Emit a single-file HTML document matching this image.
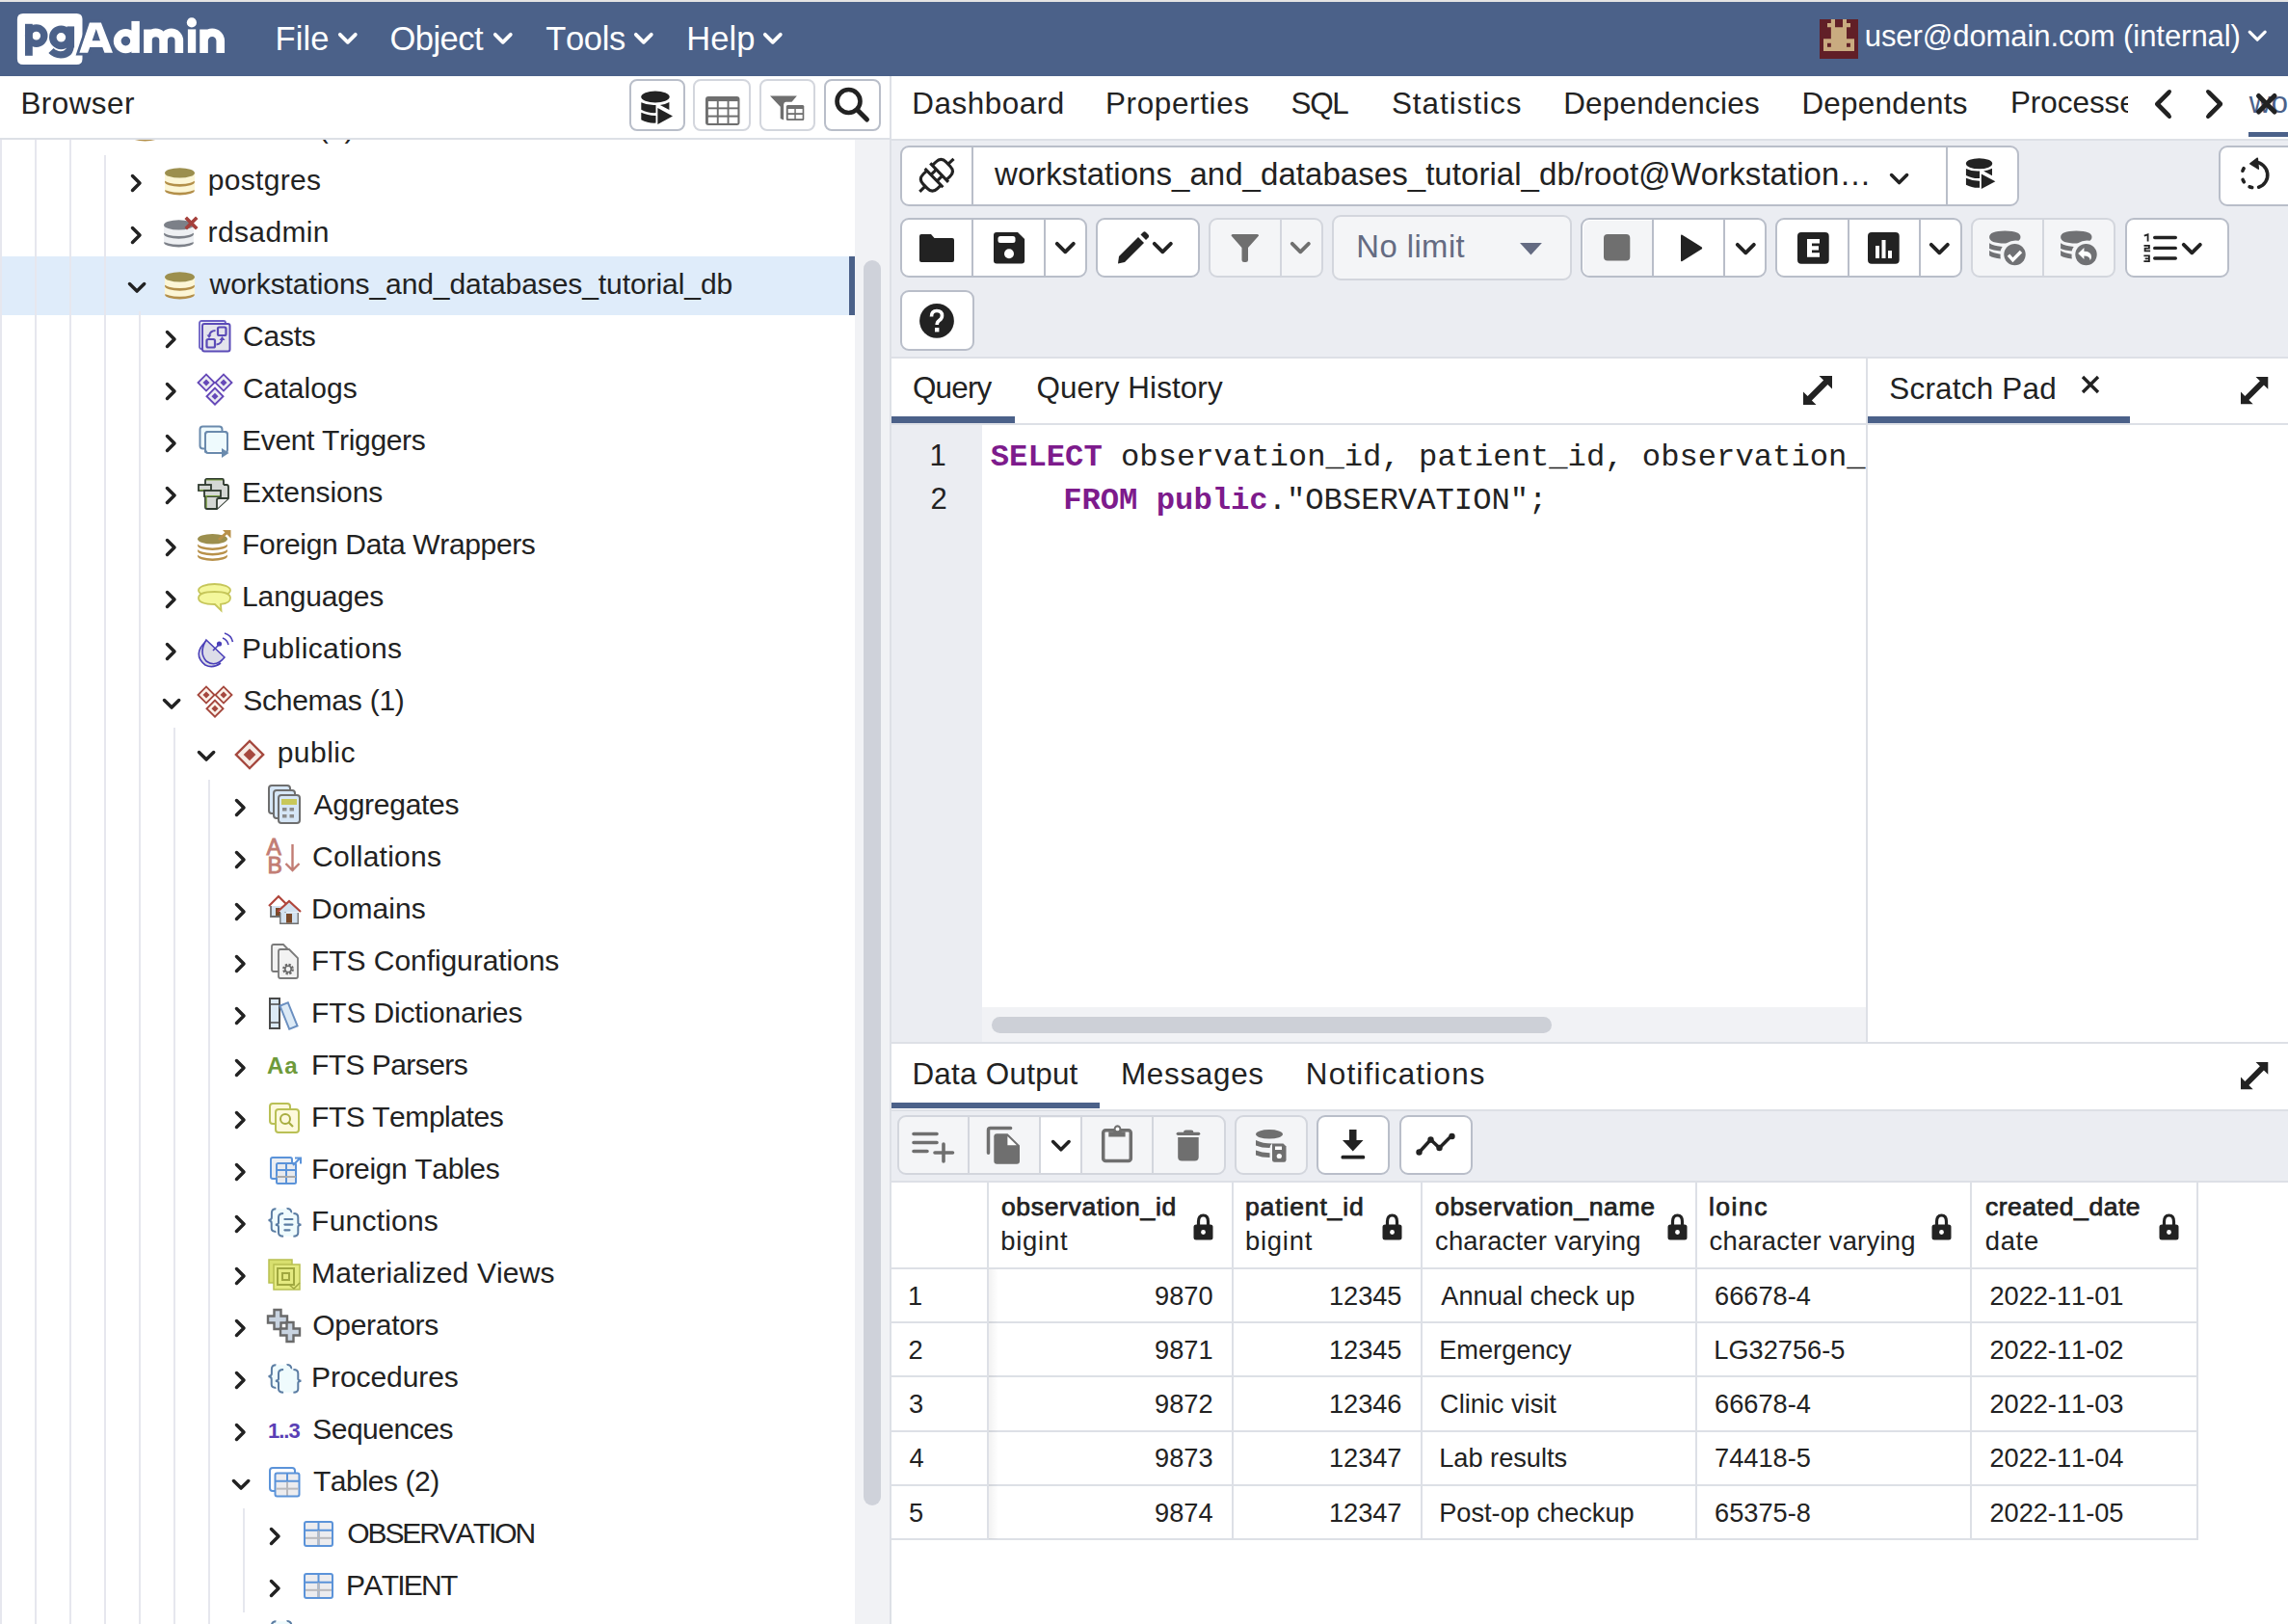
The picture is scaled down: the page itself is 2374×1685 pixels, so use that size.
<!DOCTYPE html>
<html><head><meta charset="utf-8"><title>pgAdmin 4</title>
<style>
html,body{margin:0;padding:0;}
body{width:2374px;height:1685px;position:relative;overflow:hidden;background:#fff;font-family:'Liberation Sans', sans-serif;}
.t{position:absolute;white-space:nowrap;font-kerning:none;}
.r{position:absolute;}
.s{position:absolute;overflow:visible;}
</style></head><body>
<div class="r" style="left:0.0px;top:0.0px;width:2374.0px;height:2.0px;background:#e4e4e4;"></div><div class="r" style="left:0.0px;top:2.0px;width:2374.0px;height:77.0px;background:#4b6189;"></div><svg class="s" style="left:0.0px;top:0.0px;" width="240" height="79" viewBox="0 0 240 79">
<path d="M24,14.1 H79.5 Q85.5,14.1 85.5,20.1 V61 Q85.5,67 79.5,67 H24 Q17.9,67 17.9,61 V20.1 Q17.9,14.1 24,14.1 Z" fill="#fff"/>
<rect x="26" y="24.8" width="7.8" height="33" fill="#4b6189"/>
<circle cx="37.7" cy="37.1" r="8.1" fill="none" stroke="#4b6189" stroke-width="7.4"/>
<circle cx="63.4" cy="38.8" r="8.6" fill="none" stroke="#4b6189" stroke-width="7.6"/>
<rect x="69.5" y="27.4" width="7.6" height="22" fill="#4b6189"/>
<path d="M73.3,46 Q73.3,56.8 63,56.8 Q57,56.8 53,52.5" fill="none" stroke="#4b6189" stroke-width="7.2"/>
<path d="M82.4,54.7 L92.9,23.5 L104.9,23.5 L117,54.7 L108.4,54.7 L106.3,49 L93.2,49 L91.1,54.7 Z" fill="#4b6189" stroke="#4b6189" stroke-width="5.5" stroke-linejoin="miter"/>
<path d="M82.4,54.7 L92.9,23.5 L104.9,23.5 L117,54.7 L108.4,54.7 L106.3,49 L93.2,49 L91.1,54.7 Z M95.6,42.3 L99.8,30 L104,42.3 Z" fill="#fff" fill-rule="evenodd"/>
<circle cx="130.4" cy="42.6" r="8.7" fill="none" stroke="#fff" stroke-width="7.8"/>
<rect x="136.4" y="21.9" width="8.4" height="33" fill="#fff"/>
<path d="M153.45,54.9 V30.4 M153.45,42 A8.07,8.07 0 0 1 169.6,42 V54.9 M169.6,42 A8.07,8.07 0 0 1 185.85,42 V54.9" fill="none" stroke="#fff" stroke-width="8.6"/>
<rect x="194.9" y="30.4" width="8.3" height="24.5" fill="#fff"/>
<circle cx="198.9" cy="23.4" r="5.1" fill="#fff"/>
<path d="M211.55,54.9 V30.4 M211.55,42.3 A8.6,8.6 0 0 1 228.75,42.3 V54.9" fill="none" stroke="#fff" stroke-width="8.6"/>
</svg><div class="t" style="left:285.5px;top:23.3px;font-size:34.5px;line-height:34.5px;color:#fff;font-weight:normal;font-family:'Liberation Sans', sans-serif;letter-spacing:0.157px;">File</div><div class="t" style="left:404.4px;top:23.3px;font-size:34.5px;line-height:34.5px;color:#fff;font-weight:normal;font-family:'Liberation Sans', sans-serif;letter-spacing:-0.505px;">Object</div><div class="t" style="left:566.2px;top:23.3px;font-size:34.5px;line-height:34.5px;color:#fff;font-weight:normal;font-family:'Liberation Sans', sans-serif;letter-spacing:-0.335px;">Tools</div><div class="t" style="left:712.2px;top:23.3px;font-size:34.5px;line-height:34.5px;color:#fff;font-weight:normal;font-family:'Liberation Sans', sans-serif;letter-spacing:0.108px;">Help</div><svg class="s" style="left:348.5px;top:31.5px;" width="23.6" height="15.6" viewBox="0 0 23.6 15.6"><polyline points="3.8,3.8 11.8,11.8 19.8,3.8" fill="none" stroke="#fff" stroke-width="3.8" stroke-linecap="round" stroke-linejoin="round"/></svg><svg class="s" style="left:509.6px;top:31.5px;" width="23.6" height="15.6" viewBox="0 0 23.6 15.6"><polyline points="3.8,3.8 11.8,11.8 19.8,3.8" fill="none" stroke="#fff" stroke-width="3.8" stroke-linecap="round" stroke-linejoin="round"/></svg><svg class="s" style="left:656.4px;top:31.5px;" width="23.6" height="15.6" viewBox="0 0 23.6 15.6"><polyline points="3.8,3.8 11.8,11.8 19.8,3.8" fill="none" stroke="#fff" stroke-width="3.8" stroke-linecap="round" stroke-linejoin="round"/></svg><svg class="s" style="left:789.7px;top:31.5px;" width="23.6" height="15.6" viewBox="0 0 23.6 15.6"><polyline points="3.8,3.8 11.8,11.8 19.8,3.8" fill="none" stroke="#fff" stroke-width="3.8" stroke-linecap="round" stroke-linejoin="round"/></svg><div class="r" style="left:1888.0px;top:20.0px;width:40.0px;height:41.0px;background:#6a1f27;"></div><div class="t" style="left:1934.7px;top:21.5px;font-size:31px;line-height:31px;color:#fff;font-weight:normal;font-family:'Liberation Sans', sans-serif;letter-spacing:-0.053px;">user@domain.com (internal)</div><svg class="s" style="left:2330.8px;top:29.8px;" width="22.4" height="14.4" viewBox="0 0 22.4 14.4"><polyline points="3.2,3.2 11.2,11.2 19.2,3.2" fill="none" stroke="#fff" stroke-width="3.2" stroke-linecap="round" stroke-linejoin="round"/></svg><div class="t" style="left:21.4px;top:92.0px;font-size:31.4px;line-height:31.4px;color:#222222;font-weight:normal;font-family:'Liberation Sans', sans-serif;letter-spacing:0.490px;">Browser</div><div class="r" style="left:0.0px;top:143.0px;width:923.0px;height:2.0px;background:#dde0e6;"></div><div class="r" style="left:652.6px;top:81.9px;width:58.4px;height:54.0px;background:#fff;border:2px solid #b9bec9;border-radius:8px;box-sizing:border-box;"></div><div class="r" style="left:719.3px;top:81.9px;width:59.4px;height:54.0px;background:#fff;border:2px solid #d3d6dd;border-radius:8px;box-sizing:border-box;"></div><div class="r" style="left:787.8px;top:81.9px;width:57.9px;height:54.0px;background:#fff;border:2px solid #d3d6dd;border-radius:8px;box-sizing:border-box;"></div><div class="r" style="left:855.0px;top:81.9px;width:59.1px;height:54.0px;background:#fff;border:2px solid #b9bec9;border-radius:8px;box-sizing:border-box;"></div><div class="r" style="left:923.0px;top:79.0px;width:2.0px;height:1606.0px;background:#dde0e6;"></div><div class="r" style="left:887.0px;top:145.0px;width:36.0px;height:1540.0px;background:#f1f2f5;"></div><div class="r" style="left:896.0px;top:270.0px;width:18.0px;height:1292.0px;background:#cfd2da;border-radius:9px;"></div><div class="t" style="left:946.2px;top:92.0px;font-size:31.4px;line-height:31.4px;color:#222222;font-weight:normal;font-family:'Liberation Sans', sans-serif;letter-spacing:0.561px;">Dashboard</div><div class="t" style="left:1146.9px;top:92.0px;font-size:31.4px;line-height:31.4px;color:#222222;font-weight:normal;font-family:'Liberation Sans', sans-serif;letter-spacing:0.678px;">Properties</div><div class="t" style="left:1339.6px;top:92.0px;font-size:31.4px;line-height:31.4px;color:#222222;font-weight:normal;font-family:'Liberation Sans', sans-serif;letter-spacing:-1.381px;">SQL</div><div class="t" style="left:1443.9px;top:92.0px;font-size:31.4px;line-height:31.4px;color:#222222;font-weight:normal;font-family:'Liberation Sans', sans-serif;letter-spacing:1.003px;">Statistics</div><div class="t" style="left:1622.2px;top:92.0px;font-size:31.4px;line-height:31.4px;color:#222222;font-weight:normal;font-family:'Liberation Sans', sans-serif;letter-spacing:0.250px;">Dependencies</div><div class="t" style="left:1869.4px;top:92.0px;font-size:31.4px;line-height:31.4px;color:#222222;font-weight:normal;font-family:'Liberation Sans', sans-serif;letter-spacing:0.296px;">Dependents</div><div class="r" style="left:2088px;top:85px;width:120px;height:50px;overflow:hidden;"><div class="t" style="left:-2.1px;top:6.4px;font-size:31.4px;line-height:31.4px;color:#222222;font-weight:normal;font-family:'Liberation Sans', sans-serif;">Processes</div></div><svg class="s" style="left:2233.5px;top:91.0px;" width="21.0" height="34" viewBox="0 0 21.0 34"><polyline points="17.0,4 4,17.0 17.0,30" fill="none" stroke="#222" stroke-width="4" stroke-linecap="round" stroke-linejoin="round"/></svg><svg class="s" style="left:2286.5px;top:91.0px;" width="21.0" height="34" viewBox="0 0 21.0 34"><polyline points="4,4 17.0,17.0 4,30" fill="none" stroke="#222" stroke-width="4" stroke-linecap="round" stroke-linejoin="round"/></svg><div class="r" style="left:2330px;top:85px;width:44px;height:50px;overflow:hidden;"><div class="t" style="left:3.8px;top:6.0px;font-size:31.4px;line-height:31.4px;color:#4b6189;font-weight:normal;font-family:'Liberation Sans', sans-serif;">wor</div></div><div class="r" style="left:2333.0px;top:137.0px;width:41.0px;height:5.0px;background:#4b6189;"></div><div class="r" style="left:925.0px;top:144.0px;width:1449.0px;height:2.0px;background:#dde0e6;"></div><div class="r" style="left:925.0px;top:146.0px;width:1449.0px;height:224.0px;background:#ebedf2;"></div><div class="r" style="left:925.0px;top:370.0px;width:1449.0px;height:2.0px;background:#dde0e6;"></div><div class="r" style="left:933.9px;top:150.9px;width:1160.8px;height:63.0px;background:#fff;border:2px solid #b9bec9;border-radius:9px;box-sizing:border-box;"></div><div class="r" style="left:1008.0px;top:152.0px;width:2.0px;height:61.0px;background:#b9bec9;"></div><div class="r" style="left:2019.0px;top:152.0px;width:2.0px;height:61.0px;background:#b9bec9;"></div><div class="t" style="left:1032.0px;top:164.1px;font-size:33px;line-height:33px;color:#222222;font-weight:normal;font-family:'Liberation Sans', sans-serif;letter-spacing:0.050px;">workstations_and_databases_tutorial_db/root@Workstation…</div><div class="r" style="left:2302.3px;top:150.9px;width:98.4px;height:63.0px;background:#fff;border:2px solid #b9bec9;border-radius:9px;box-sizing:border-box;"></div><div class="r" style="left:934.2px;top:226.3px;width:193.5px;height:62.0px;background:#fff;border:2px solid #b9bec9;border-radius:9px;box-sizing:border-box;"></div><div class="r" style="left:1008.0px;top:227.0px;width:2.0px;height:60.6px;background:#b9bec9;"></div><div class="r" style="left:1083.0px;top:227.0px;width:2.0px;height:60.6px;background:#b9bec9;"></div><div class="r" style="left:1137.3px;top:226.3px;width:107.3px;height:62.0px;background:#fff;border:2px solid #b9bec9;border-radius:9px;box-sizing:border-box;"></div><div class="r" style="left:1254.1px;top:226.3px;width:118.6px;height:62.0px;background:#f4f5f7;border:2px solid #d3d6dd;border-radius:9px;box-sizing:border-box;"></div><div class="r" style="left:1328.0px;top:227.0px;width:2.0px;height:60.6px;background:#d3d6dd;"></div><div class="r" style="left:1382.1px;top:223.3px;width:248.6px;height:68.2px;background:#f4f5f7;border:2px solid #d3d6dd;border-radius:9px;box-sizing:border-box;"></div><div class="t" style="left:1407.3px;top:239.6px;font-size:32.8px;line-height:32.8px;color:#646b82;font-weight:normal;font-family:'Liberation Sans', sans-serif;letter-spacing:0.442px;">No limit</div><div class="r" style="left:1640.3px;top:226.3px;width:192.4px;height:62.0px;background:#fff;border:2px solid #b9bec9;border-radius:9px;box-sizing:border-box;"></div><div class="r" style="left:1643.0px;top:229.0px;width:71.0px;height:56.6px;background:#f4f5f7;border-radius:7px 0 0 7px;"></div><div class="r" style="left:1714.0px;top:227.0px;width:2.0px;height:60.6px;background:#b9bec9;"></div><div class="r" style="left:1788.0px;top:227.0px;width:2.0px;height:60.6px;background:#b9bec9;"></div><div class="r" style="left:1841.8px;top:226.3px;width:193.9px;height:62.0px;background:#fff;border:2px solid #b9bec9;border-radius:9px;box-sizing:border-box;"></div><div class="r" style="left:1917.0px;top:227.0px;width:2.0px;height:60.6px;background:#b9bec9;"></div><div class="r" style="left:1991.0px;top:227.0px;width:2.0px;height:60.6px;background:#b9bec9;"></div><div class="r" style="left:2045.1px;top:226.3px;width:150.1px;height:62.0px;background:#f4f5f7;border:2px solid #d3d6dd;border-radius:9px;box-sizing:border-box;"></div><div class="r" style="left:2119.0px;top:227.0px;width:2.0px;height:60.6px;background:#d3d6dd;"></div><div class="r" style="left:2204.9px;top:226.3px;width:107.8px;height:62.0px;background:#fff;border:2px solid #b9bec9;border-radius:9px;box-sizing:border-box;"></div><div class="r" style="left:934.2px;top:301.1px;width:76.5px;height:62.6px;background:#fff;border:2px solid #b9bec9;border-radius:9px;box-sizing:border-box;"></div><div class="r" style="left:925.0px;top:372.0px;width:1449.0px;height:68.0px;background:#fff;"></div><div class="t" style="left:946.9px;top:386.9px;font-size:31.4px;line-height:31.4px;color:#222222;font-weight:normal;font-family:'Liberation Sans', sans-serif;letter-spacing:-0.765px;">Query</div><div class="t" style="left:1075.5px;top:386.9px;font-size:31.4px;line-height:31.4px;color:#222222;font-weight:normal;font-family:'Liberation Sans', sans-serif;letter-spacing:0.102px;">Query History</div><div class="r" style="left:925.0px;top:432.0px;width:128.0px;height:7.0px;background:#4b6189;"></div><div class="r" style="left:1936.0px;top:372.0px;width:2.0px;height:709.0px;background:#dde0e6;"></div><div class="t" style="left:1960.3px;top:387.7px;font-size:31.4px;line-height:31.4px;color:#222222;font-weight:normal;font-family:'Liberation Sans', sans-serif;letter-spacing:0.231px;">Scratch Pad</div><div class="r" style="left:1938.0px;top:432.0px;width:272.0px;height:7.0px;background:#4b6189;"></div><div class="r" style="left:925.0px;top:439.0px;width:1449.0px;height:2.0px;background:#dde0e6;"></div><div class="r" style="left:925.0px;top:441.0px;width:94.0px;height:640.0px;background:#ebedf2;"></div><div class="t" style="left:964.6px;top:457.3px;font-size:31px;line-height:31px;color:#222;font-weight:normal;font-family:'Liberation Sans', sans-serif;">1</div><div class="t" style="left:965.4px;top:502.1px;font-size:31px;line-height:31px;color:#222;font-weight:normal;font-family:'Liberation Sans', sans-serif;">2</div><div class="r" style="left:1019px;top:441px;width:917px;height:600px;overflow:hidden;"><div class="t" style="left:8.8px;top:17.8px;font-size:32.2px;line-height:32.2px;color:#222;font-weight:normal;font-family:'Liberation Mono', monospace;"><span style="color:#7d1b8c;font-weight:bold">SELECT</span> observation_id, patient_id, observation_name, loinc, created_date</div><div class="t" style="left:6.9px;top:62.6px;font-size:32.2px;line-height:32.2px;color:#222;font-weight:normal;font-family:'Liberation Mono', monospace;white-space:pre;">    <span style="color:#7d1b8c;font-weight:bold">FROM</span> <span style="color:#7d1b8c;font-weight:bold">public</span>."OBSERVATION";</div></div><div class="r" style="left:1019.0px;top:1045.0px;width:917.0px;height:36.0px;background:#f1f2f5;"></div><div class="r" style="left:1029.0px;top:1054.5px;width:581.0px;height:17.5px;background:#cdd0d7;border-radius:9px;"></div><div class="r" style="left:925.0px;top:1081.0px;width:1449.0px;height:2.0px;background:#dde0e6;"></div><div class="t" style="left:946.4px;top:1098.8px;font-size:31.4px;line-height:31.4px;color:#222222;font-weight:normal;font-family:'Liberation Sans', sans-serif;letter-spacing:0.269px;">Data Output</div><div class="t" style="left:1163.0px;top:1098.8px;font-size:31.4px;line-height:31.4px;color:#222222;font-weight:normal;font-family:'Liberation Sans', sans-serif;letter-spacing:0.714px;">Messages</div><div class="t" style="left:1354.8px;top:1098.8px;font-size:31.4px;line-height:31.4px;color:#222222;font-weight:normal;font-family:'Liberation Sans', sans-serif;letter-spacing:1.232px;">Notifications</div><div class="r" style="left:925.0px;top:1144.4px;width:216.0px;height:6.1px;background:#4b6189;"></div><div class="r" style="left:925.0px;top:1150.5px;width:1449.0px;height:2.0px;background:#dde0e6;"></div><div class="r" style="left:925.0px;top:1152.5px;width:1449.0px;height:72.0px;background:#ebedf2;"></div><div class="r" style="left:930.6px;top:1157.3px;width:341.1px;height:62.1px;background:#f4f5f7;border:2px solid #d3d6dd;border-radius:9px;box-sizing:border-box;"></div><div class="r" style="left:1079.0px;top:1160.0px;width:43.0px;height:56.7px;background:#fff;"></div><div class="r" style="left:1004.0px;top:1158.0px;width:2.0px;height:60.7px;background:#d3d6dd;"></div><div class="r" style="left:1078.0px;top:1158.0px;width:2.0px;height:60.7px;background:#d3d6dd;"></div><div class="r" style="left:1121.0px;top:1158.0px;width:2.0px;height:60.7px;background:#d3d6dd;"></div><div class="r" style="left:1195.0px;top:1158.0px;width:2.0px;height:60.7px;background:#d3d6dd;"></div><div class="r" style="left:1281.3px;top:1157.3px;width:75.4px;height:62.1px;background:#f4f5f7;border:2px solid #d3d6dd;border-radius:9px;box-sizing:border-box;"></div><div class="r" style="left:1365.9px;top:1157.3px;width:76.4px;height:62.1px;background:#fff;border:2px solid #b9bec9;border-radius:9px;box-sizing:border-box;"></div><div class="r" style="left:1452.2px;top:1157.3px;width:75.7px;height:62.1px;background:#fff;border:2px solid #b9bec9;border-radius:9px;box-sizing:border-box;"></div><div class="r" style="left:925.0px;top:1224.5px;width:1449.0px;height:2.0px;background:#dde0e6;"></div><div class="r" style="left:1024.0px;top:1226.5px;width:2.0px;height:371.5px;background:#dde0e6;"></div><div class="r" style="left:1278.0px;top:1226.5px;width:2.0px;height:371.5px;background:#dde0e6;"></div><div class="r" style="left:1474.0px;top:1226.5px;width:2.0px;height:371.5px;background:#dde0e6;"></div><div class="r" style="left:1759.0px;top:1226.5px;width:2.0px;height:371.5px;background:#dde0e6;"></div><div class="r" style="left:2044.0px;top:1226.5px;width:2.0px;height:371.5px;background:#dde0e6;"></div><div class="r" style="left:2279.0px;top:1226.5px;width:2.0px;height:371.5px;background:#dde0e6;"></div><div class="r" style="left:925.0px;top:1315.0px;width:1356.0px;height:2.0px;background:#dde0e6;"></div><div class="r" style="left:925.0px;top:1371.0px;width:1356.0px;height:2.0px;background:#dde0e6;"></div><div class="r" style="left:925.0px;top:1427.0px;width:1356.0px;height:2.0px;background:#dde0e6;"></div><div class="r" style="left:925.0px;top:1484.0px;width:1356.0px;height:2.0px;background:#dde0e6;"></div><div class="r" style="left:925.0px;top:1540.0px;width:1356.0px;height:2.0px;background:#dde0e6;"></div><div class="r" style="left:925.0px;top:1596.0px;width:1356.0px;height:2.0px;background:#dde0e6;"></div><div class="r" style="left:1026.0px;top:1317.0px;width:10.0px;height:280.0px;background:linear-gradient(90deg, rgba(0,0,0,0.05), rgba(0,0,0,0));"></div><div class="t" style="left:1038.9px;top:1239.3px;font-size:26.5px;line-height:26.5px;color:#222;font-weight:normal;font-family:'Liberation Sans', sans-serif;-webkit-text-stroke:0.75px #222;letter-spacing:0.689px;">observation_id</div><div class="t" style="left:1038.2px;top:1273.8px;font-size:27.4px;line-height:27.4px;color:#222;font-weight:normal;font-family:'Liberation Sans', sans-serif;letter-spacing:0.793px;">bigint</div><div class="t" style="left:1292.0px;top:1239.3px;font-size:26.5px;line-height:26.5px;color:#222;font-weight:normal;font-family:'Liberation Sans', sans-serif;-webkit-text-stroke:0.75px #222;letter-spacing:0.865px;">patient_id</div><div class="t" style="left:1291.9px;top:1273.8px;font-size:27.4px;line-height:27.4px;color:#222;font-weight:normal;font-family:'Liberation Sans', sans-serif;letter-spacing:0.793px;">bigint</div><div class="t" style="left:1489.1px;top:1239.3px;font-size:26.5px;line-height:26.5px;color:#222;font-weight:normal;font-family:'Liberation Sans', sans-serif;-webkit-text-stroke:0.75px #222;letter-spacing:0.651px;">observation_name</div><div class="t" style="left:1489.0px;top:1273.8px;font-size:27.4px;line-height:27.4px;color:#222;font-weight:normal;font-family:'Liberation Sans', sans-serif;letter-spacing:0.211px;">character varying</div><div class="t" style="left:1772.9px;top:1239.3px;font-size:26.5px;line-height:26.5px;color:#222;font-weight:normal;font-family:'Liberation Sans', sans-serif;-webkit-text-stroke:0.75px #222;letter-spacing:1.546px;">loinc</div><div class="t" style="left:1773.5px;top:1273.8px;font-size:27.4px;line-height:27.4px;color:#222;font-weight:normal;font-family:'Liberation Sans', sans-serif;letter-spacing:0.242px;">character varying</div><div class="t" style="left:2059.9px;top:1239.3px;font-size:26.5px;line-height:26.5px;color:#222;font-weight:normal;font-family:'Liberation Sans', sans-serif;-webkit-text-stroke:0.75px #222;letter-spacing:0.545px;">created_date</div><div class="t" style="left:2059.8px;top:1273.8px;font-size:27.4px;line-height:27.4px;color:#222;font-weight:normal;font-family:'Liberation Sans', sans-serif;letter-spacing:0.680px;">date</div><div class="t" style="left:941.9px;top:1330.7px;font-size:27.2px;line-height:27.2px;color:#222222;font-weight:normal;font-family:'Liberation Sans', sans-serif;">1</div><div class="t" style="right:1115.5px;top:1330.7px;font-size:27.2px;line-height:27.2px;color:#222;">9870</div><div class="t" style="right:919.5px;top:1330.7px;font-size:27.2px;line-height:27.2px;color:#222;">12345</div><div class="t" style="left:1495.3px;top:1330.7px;font-size:27.2px;line-height:27.2px;color:#222222;font-weight:normal;font-family:'Liberation Sans', sans-serif;">Annual check up</div><div class="t" style="left:1779.1px;top:1330.7px;font-size:27.2px;line-height:27.2px;color:#222222;font-weight:normal;font-family:'Liberation Sans', sans-serif;">66678-4</div><div class="t" style="left:2064.4px;top:1330.7px;font-size:27.2px;line-height:27.2px;color:#222222;font-weight:normal;font-family:'Liberation Sans', sans-serif;">2022-11-01</div><div class="t" style="left:942.6px;top:1386.9px;font-size:27.2px;line-height:27.2px;color:#222222;font-weight:normal;font-family:'Liberation Sans', sans-serif;">2</div><div class="t" style="right:1115.5px;top:1386.9px;font-size:27.2px;line-height:27.2px;color:#222;">9871</div><div class="t" style="right:919.5px;top:1386.9px;font-size:27.2px;line-height:27.2px;color:#222;">12345</div><div class="t" style="left:1493.2px;top:1386.9px;font-size:27.2px;line-height:27.2px;color:#222222;font-weight:normal;font-family:'Liberation Sans', sans-serif;">Emergency</div><div class="t" style="left:1778.3px;top:1386.9px;font-size:27.2px;line-height:27.2px;color:#222222;font-weight:normal;font-family:'Liberation Sans', sans-serif;">LG32756-5</div><div class="t" style="left:2064.4px;top:1386.9px;font-size:27.2px;line-height:27.2px;color:#222222;font-weight:normal;font-family:'Liberation Sans', sans-serif;">2022-11-02</div><div class="t" style="left:943.0px;top:1443.1px;font-size:27.2px;line-height:27.2px;color:#222222;font-weight:normal;font-family:'Liberation Sans', sans-serif;">3</div><div class="t" style="right:1115.5px;top:1443.1px;font-size:27.2px;line-height:27.2px;color:#222;">9872</div><div class="t" style="right:919.5px;top:1443.1px;font-size:27.2px;line-height:27.2px;color:#222;">12346</div><div class="t" style="left:1494.0px;top:1443.1px;font-size:27.2px;line-height:27.2px;color:#222222;font-weight:normal;font-family:'Liberation Sans', sans-serif;">Clinic visit</div><div class="t" style="left:1779.1px;top:1443.1px;font-size:27.2px;line-height:27.2px;color:#222222;font-weight:normal;font-family:'Liberation Sans', sans-serif;">66678-4</div><div class="t" style="left:2064.4px;top:1443.1px;font-size:27.2px;line-height:27.2px;color:#222222;font-weight:normal;font-family:'Liberation Sans', sans-serif;">2022-11-03</div><div class="t" style="left:943.4px;top:1499.3px;font-size:27.2px;line-height:27.2px;color:#222222;font-weight:normal;font-family:'Liberation Sans', sans-serif;">4</div><div class="t" style="right:1115.5px;top:1499.3px;font-size:27.2px;line-height:27.2px;color:#222;">9873</div><div class="t" style="right:919.5px;top:1499.3px;font-size:27.2px;line-height:27.2px;color:#222;">12347</div><div class="t" style="left:1493.2px;top:1499.3px;font-size:27.2px;line-height:27.2px;color:#222222;font-weight:normal;font-family:'Liberation Sans', sans-serif;">Lab results</div><div class="t" style="left:1779.1px;top:1499.3px;font-size:27.2px;line-height:27.2px;color:#222222;font-weight:normal;font-family:'Liberation Sans', sans-serif;">74418-5</div><div class="t" style="left:2064.4px;top:1499.3px;font-size:27.2px;line-height:27.2px;color:#222222;font-weight:normal;font-family:'Liberation Sans', sans-serif;">2022-11-04</div><div class="t" style="left:942.9px;top:1555.5px;font-size:27.2px;line-height:27.2px;color:#222222;font-weight:normal;font-family:'Liberation Sans', sans-serif;">5</div><div class="t" style="right:1115.5px;top:1555.5px;font-size:27.2px;line-height:27.2px;color:#222;">9874</div><div class="t" style="right:919.5px;top:1555.5px;font-size:27.2px;line-height:27.2px;color:#222;">12347</div><div class="t" style="left:1493.2px;top:1555.5px;font-size:27.2px;line-height:27.2px;color:#222222;font-weight:normal;font-family:'Liberation Sans', sans-serif;">Post-op checkup</div><div class="t" style="left:1779.1px;top:1555.5px;font-size:27.2px;line-height:27.2px;color:#222222;font-weight:normal;font-family:'Liberation Sans', sans-serif;">65375-8</div><div class="t" style="left:2064.4px;top:1555.5px;font-size:27.2px;line-height:27.2px;color:#222222;font-weight:normal;font-family:'Liberation Sans', sans-serif;">2022-11-05</div><div class="r" style="left:0;top:145px;width:887px;height:1540px;overflow:hidden;"><div class="r" style="left:0.0px;top:121.0px;width:887.0px;height:60.8px;background:#dfecfa;"></div><div class="r" style="left:881.0px;top:121.0px;width:6.0px;height:60.8px;background:#4b6189;"></div><div class="r" style="left:0.3px;top:0.0px;width:1.6px;height:1540.0px;background:#e6e7ee;"></div><div class="r" style="left:36.0px;top:0.0px;width:1.6px;height:1540.0px;background:#e6e7ee;"></div><div class="r" style="left:72.0px;top:0.0px;width:1.6px;height:1540.0px;background:#e6e7ee;"></div><div class="r" style="left:108.0px;top:16.0px;width:1.6px;height:1524.0px;background:#e6e7ee;"></div><div class="r" style="left:144.0px;top:178.0px;width:1.6px;height:1362.0px;background:#e6e7ee;"></div><div class="r" style="left:180.0px;top:610.0px;width:1.6px;height:930.0px;background:#e6e7ee;"></div><div class="r" style="left:216.0px;top:664.0px;width:1.6px;height:876.0px;background:#e6e7ee;"></div><div class="r" style="left:252.0px;top:1420.0px;width:1.6px;height:108.0px;background:#e6e7ee;"></div><div class="t" style="left:179.1px;top:-26.8px;font-size:30px;line-height:30px;color:#222222;font-weight:normal;font-family:'Liberation Sans', sans-serif;">Databases (3)</div><svg class="s" style="left:94.5px;top:-16.2px;" width="22.2" height="14.6" viewBox="0 0 22.2 14.6"><polyline points="3.5,3.5 11.1,11.1 18.7,3.5" fill="none" stroke="#222" stroke-width="3.5" stroke-linecap="round" stroke-linejoin="round"/></svg><svg class="s" style="left:134.8px;top:-27.0px;" width="31" height="28.4" viewBox="0 0 31 28.4"><ellipse cx="15.5" cy="23.4" rx="15.5" ry="5" fill="#b38f49"/>
<rect x="0" y="14.899999999999999" width="31" height="8.5" fill="#fcf6d6"/>
<ellipse cx="15.5" cy="21.2" rx="15.5" ry="4.6" fill="#fcf6d6"/>
<ellipse cx="15.5" cy="14.7" rx="15.5" ry="5" fill="#b38f49"/>
<rect x="0" y="5.5" width="31" height="8" fill="#fcf6d6"/>
<ellipse cx="15.5" cy="12.499999999999998" rx="15.5" ry="4.6" fill="#fcf6d6"/>
<ellipse cx="15.5" cy="5.4" rx="15.5" ry="5.2" fill="#9c8f4e"/></svg><div class="t" style="left:215.7px;top:27.2px;font-size:30px;line-height:30px;color:#222222;font-weight:normal;font-family:'Liberation Sans', sans-serif;letter-spacing:0.322px;">postgres</div><svg class="s" style="left:134.3px;top:33.9px;" width="14.5" height="22.0" viewBox="0 0 14.5 22.0"><polyline points="3.5,3.5 11.0,11.0 3.5,18.5" fill="none" stroke="#222" stroke-width="3.5" stroke-linecap="round" stroke-linejoin="round"/></svg><svg class="s" style="left:170.8px;top:28.5px;" width="31" height="28.4" viewBox="0 0 31 28.4"><ellipse cx="15.5" cy="23.4" rx="15.5" ry="5" fill="#b38f49"/>
<rect x="0" y="14.899999999999999" width="31" height="8.5" fill="#fcf6d6"/>
<ellipse cx="15.5" cy="21.2" rx="15.5" ry="4.6" fill="#fcf6d6"/>
<ellipse cx="15.5" cy="14.7" rx="15.5" ry="5" fill="#b38f49"/>
<rect x="0" y="5.5" width="31" height="8" fill="#fcf6d6"/>
<ellipse cx="15.5" cy="12.499999999999998" rx="15.5" ry="4.6" fill="#fcf6d6"/>
<ellipse cx="15.5" cy="5.4" rx="15.5" ry="5.2" fill="#9c8f4e"/></svg><div class="t" style="left:215.6px;top:81.2px;font-size:30px;line-height:30px;color:#222222;font-weight:normal;font-family:'Liberation Sans', sans-serif;letter-spacing:0.365px;">rdsadmin</div><svg class="s" style="left:134.3px;top:87.9px;" width="14.5" height="22.0" viewBox="0 0 14.5 22.0"><polyline points="3.5,3.5 11.0,11.0 3.5,18.5" fill="none" stroke="#222" stroke-width="3.5" stroke-linecap="round" stroke-linejoin="round"/></svg><svg class="s" style="left:169.8px;top:83.1px;" width="31" height="28" viewBox="0 0 31 28"><ellipse cx="15.5" cy="23.4" rx="15.5" ry="5" fill="#7c8088"/>
<rect x="0" y="14.899999999999999" width="31" height="8.5" fill="#eef0f3"/>
<ellipse cx="15.5" cy="21.2" rx="15.5" ry="4.6" fill="#eef0f3"/>
<ellipse cx="15.5" cy="14.7" rx="15.5" ry="5" fill="#7c8088"/>
<rect x="0" y="5.5" width="31" height="8" fill="#eef0f3"/>
<ellipse cx="15.5" cy="12.499999999999998" rx="15.5" ry="4.6" fill="#eef0f3"/>
<ellipse cx="15.5" cy="5.4" rx="15.5" ry="5.2" fill="#7c8088"/></svg><svg class="s" style="left:192.0px;top:79.8px;" width="13" height="13" viewBox="0 0 13 13"><path d="M2,2 L11,11 M11,2 L2,11" stroke="#a5403c" stroke-width="3.6" stroke-linecap="square"/></svg><div class="t" style="left:217.6px;top:135.2px;font-size:30px;line-height:30px;color:#222222;font-weight:normal;font-family:'Liberation Sans', sans-serif;letter-spacing:-0.075px;">workstations_and_databases_tutorial_db</div><svg class="s" style="left:130.5px;top:145.8px;" width="22.2" height="14.6" viewBox="0 0 22.2 14.6"><polyline points="3.5,3.5 11.1,11.1 18.7,3.5" fill="none" stroke="#222" stroke-width="3.5" stroke-linecap="round" stroke-linejoin="round"/></svg><svg class="s" style="left:170.8px;top:136.5px;" width="31" height="28.4" viewBox="0 0 31 28.4"><ellipse cx="15.5" cy="23.4" rx="15.5" ry="5" fill="#b38f49"/>
<rect x="0" y="14.899999999999999" width="31" height="8.5" fill="#fcf6d6"/>
<ellipse cx="15.5" cy="21.2" rx="15.5" ry="4.6" fill="#fcf6d6"/>
<ellipse cx="15.5" cy="14.7" rx="15.5" ry="5" fill="#b38f49"/>
<rect x="0" y="5.5" width="31" height="8" fill="#fcf6d6"/>
<ellipse cx="15.5" cy="12.499999999999998" rx="15.5" ry="4.6" fill="#fcf6d6"/>
<ellipse cx="15.5" cy="5.4" rx="15.5" ry="5.2" fill="#9c8f4e"/></svg><div class="t" style="left:252.1px;top:189.2px;font-size:30px;line-height:30px;color:#222222;font-weight:normal;font-family:'Liberation Sans', sans-serif;letter-spacing:-0.269px;">Casts</div><svg class="s" style="left:170.3px;top:195.9px;" width="14.5" height="22.0" viewBox="0 0 14.5 22.0"><polyline points="3.5,3.5 11.0,11.0 3.5,18.5" fill="none" stroke="#222" stroke-width="3.5" stroke-linecap="round" stroke-linejoin="round"/></svg><svg class="s" style="left:205.8px;top:187.4px;" width="34" height="34" viewBox="0 0 34 34"><rect x="1" y="1" width="27" height="29" rx="2" fill="#eef0fa" stroke="#6b5fc4" stroke-width="1.8"/>
<rect x="4" y="4" width="28.5" height="28.5" rx="2" fill="#e4e4ec" stroke="#5b4bb7" stroke-width="2"/>
<rect x="20" y="7.5" width="8.5" height="8.5" rx="1.5" fill="#e4e4ec" stroke="#5b4bb7" stroke-width="2.2"/>
<rect x="8.5" y="20" width="8.5" height="8.5" rx="1.5" fill="#e4e4ec" stroke="#5b4bb7" stroke-width="2.2"/>
<path d="M17.5,11 Q12,11 11,16.5 M18.5,25.5 Q24,25 24.5,19.5" fill="none" stroke="#5b4bb7" stroke-width="2"/>
<path d="M8.5,15.5 L13.5,15.5 L11,19 Z M21.5,21 L27.5,21 L24.5,17 Z" fill="#5b4bb7"/></svg><div class="t" style="left:252.1px;top:243.2px;font-size:30px;line-height:30px;color:#222222;font-weight:normal;font-family:'Liberation Sans', sans-serif;letter-spacing:0.029px;">Catalogs</div><svg class="s" style="left:170.3px;top:249.9px;" width="14.5" height="22.0" viewBox="0 0 14.5 22.0"><polyline points="3.5,3.5 11.0,11.0 3.5,18.5" fill="none" stroke="#222" stroke-width="3.5" stroke-linecap="round" stroke-linejoin="round"/></svg><svg class="s" style="left:204.7px;top:242.8px;" width="36" height="33" viewBox="0 0 36 33"><rect x="3" y="3" width="12" height="12" transform="rotate(45 9 9)" fill="#ececf2" stroke="#6548b8" stroke-width="1.9"/><rect x="6.5" y="6.5" width="5" height="5" transform="rotate(45 9 9)" fill="#6548b8"/><rect x="21" y="3" width="12" height="12" transform="rotate(45 27 9)" fill="#ececf2" stroke="#6548b8" stroke-width="1.9"/><rect x="24.5" y="6.5" width="5" height="5" transform="rotate(45 27 9)" fill="#6548b8"/><rect x="12" y="17.2" width="12" height="12" transform="rotate(45 18 23.2)" fill="#ececf2" stroke="#6548b8" stroke-width="1.9"/><rect x="15.5" y="20.7" width="5" height="5" transform="rotate(45 18 23.2)" fill="#6548b8"/></svg><div class="t" style="left:251.1px;top:297.2px;font-size:30px;line-height:30px;color:#222222;font-weight:normal;font-family:'Liberation Sans', sans-serif;letter-spacing:-0.341px;">Event Triggers</div><svg class="s" style="left:170.3px;top:303.9px;" width="14.5" height="22.0" viewBox="0 0 14.5 22.0"><polyline points="3.5,3.5 11.0,11.0 3.5,18.5" fill="none" stroke="#222" stroke-width="3.5" stroke-linecap="round" stroke-linejoin="round"/></svg><svg class="s" style="left:206.0px;top:296.1px;" width="32" height="34" viewBox="0 0 32 34"><rect x="1.5" y="1.5" width="23" height="23" rx="3" fill="#eefafd" stroke="#6a8aad" stroke-width="2"/>
<path d="M7,28.5 L7,10 Q7,7 10,7 L27,7 Q30,7 30,10 L30,16" fill="#eefafd" stroke="#6a8aad" stroke-width="2"/>
<rect x="7" y="7" width="23" height="21.5" rx="3" fill="#eefafd" stroke="#6a8aad" stroke-width="2"/>
<rect x="9" y="27" width="20" height="4" fill="#fff"/>
<path d="M7,26 Q7,29 10,29 L24,29" fill="none" stroke="#6a8aad" stroke-width="2"/>
<path d="M24,24 L31.5,29 L24,34 Z" fill="#6a8aad"/></svg><div class="t" style="left:251.1px;top:351.2px;font-size:30px;line-height:30px;color:#222222;font-weight:normal;font-family:'Liberation Sans', sans-serif;letter-spacing:-0.056px;">Extensions</div><svg class="s" style="left:170.3px;top:357.9px;" width="14.5" height="22.0" viewBox="0 0 14.5 22.0"><polyline points="3.5,3.5 11.0,11.0 3.5,18.5" fill="none" stroke="#222" stroke-width="3.5" stroke-linecap="round" stroke-linejoin="round"/></svg><svg class="s" style="left:205.2px;top:350.6px;" width="34" height="34" viewBox="0 0 34 34"><rect x="8" y="1" width="19" height="9" rx="1.5" fill="#d4d7d4" stroke="#2f3a2f" stroke-width="1.8"/>
<path d="M8,10 L8,30 Q8,32 10,32 L20,32 L32,21 L32,9 Q32,7 30,7 L27,7" fill="#d4d7d4" stroke="#2f3a2f" stroke-width="1.8"/>
<rect x="1" y="7" width="13" height="6" fill="#d4d7d4" stroke="#2f3a2f" stroke-width="1.8"/>
<path d="M2,12.5 H13" stroke="#7aa040" stroke-width="1.2"/>
<rect x="7" y="13" width="17" height="6" fill="#d4d7d4" stroke="#2f3a2f" stroke-width="1.8"/>
<path d="M8,18.5 H23 M9.2,19 V31 M9,2 H26" stroke="#7aa040" stroke-width="1.2"/>
<path d="M20,32 L20,23 Q20,21 22,21 L32,21" fill="#f0f0f0" stroke="#2f3a2f" stroke-width="1.8"/></svg><div class="t" style="left:251.1px;top:405.2px;font-size:30px;line-height:30px;color:#222222;font-weight:normal;font-family:'Liberation Sans', sans-serif;letter-spacing:-0.352px;">Foreign Data Wrappers</div><svg class="s" style="left:170.3px;top:411.9px;" width="14.5" height="22.0" viewBox="0 0 14.5 22.0"><polyline points="3.5,3.5 11.0,11.0 3.5,18.5" fill="none" stroke="#222" stroke-width="3.5" stroke-linecap="round" stroke-linejoin="round"/></svg><svg class="s" style="left:205.4px;top:409.1px;" width="32" height="30" viewBox="0 0 32 30"><ellipse cx="15.5" cy="23" rx="15.5" ry="5" fill="#b8914a"/>
<ellipse cx="15.5" cy="20.5" rx="15.5" ry="5" fill="#fff"/>
<ellipse cx="15.5" cy="17.5" rx="15.5" ry="5" fill="#b8914a"/>
<ellipse cx="15.5" cy="15" rx="15.5" ry="5" fill="#fff"/>
<ellipse cx="15.5" cy="12" rx="15.5" ry="5" fill="#b8914a"/>
<ellipse cx="15.5" cy="9.5" rx="15.5" ry="5" fill="#fff"/>
<ellipse cx="15.5" cy="5.3" rx="15.5" ry="5.3" fill="#9c8f4e"/></svg><svg class="s" style="left:225.4px;top:403.8px;" width="15" height="13" viewBox="0 0 15 13"><path d="M2,11 L11,3" stroke="#b8914a" stroke-width="3"/><path d="M6,1 H14.5 V9.5 Z" fill="#b8914a"/></svg><div class="t" style="left:251.1px;top:459.2px;font-size:30px;line-height:30px;color:#222222;font-weight:normal;font-family:'Liberation Sans', sans-serif;letter-spacing:-0.166px;">Languages</div><svg class="s" style="left:170.3px;top:465.9px;" width="14.5" height="22.0" viewBox="0 0 14.5 22.0"><polyline points="3.5,3.5 11.0,11.0 3.5,18.5" fill="none" stroke="#222" stroke-width="3.5" stroke-linecap="round" stroke-linejoin="round"/></svg><svg class="s" style="left:205.4px;top:460.3px;" width="36" height="30" viewBox="0 0 36 30"><ellipse cx="17.5" cy="7.5" rx="16.5" ry="6.5" fill="#f4f79c" stroke="#c6c65a" stroke-width="1.8"/>
<path d="M1,15.5 Q1,9 17.5,9 Q34,9 34,15.5 Q34,21 24,21.8 L24.5,28.5 L18,22 Q1,22 1,15.5 Z" fill="#f4f79c" stroke="#c6c65a" stroke-width="1.8"/></svg><div class="t" style="left:251.1px;top:513.2px;font-size:30px;line-height:30px;color:#222222;font-weight:normal;font-family:'Liberation Sans', sans-serif;letter-spacing:0.380px;">Publications</div><svg class="s" style="left:170.3px;top:519.9px;" width="14.5" height="22.0" viewBox="0 0 14.5 22.0"><polyline points="3.5,3.5 11.0,11.0 3.5,18.5" fill="none" stroke="#222" stroke-width="3.5" stroke-linecap="round" stroke-linejoin="round"/></svg><svg class="s" style="left:203.0px;top:510.2px;" width="39" height="38" viewBox="0 0 39 38"><path d="M11,10 Q-4,24 10,35 Q18,39 26,33" fill="#dcdde8" stroke="#4a3fb8" stroke-width="1.6"/>
<path d="M11,9 L30,27 Q21,38 11,31 Q3,22 11,9 Z" fill="#dcdde8" stroke="#4a3fb8" stroke-width="1.6"/>
<path d="M18,20 L24,14" stroke="#4a3fb8" stroke-width="1.6"/>
<circle cx="24.5" cy="13" r="2.6" fill="#4a3fb8"/>
<path d="M28,7 Q33,9 34,14 M30,2 Q37,4 38.5,11" fill="none" stroke="#4a3fb8" stroke-width="1.6"/></svg><div class="t" style="left:252.2px;top:567.2px;font-size:30px;line-height:30px;color:#222222;font-weight:normal;font-family:'Liberation Sans', sans-serif;letter-spacing:-0.243px;">Schemas (1)</div><svg class="s" style="left:166.5px;top:577.8px;" width="22.2" height="14.6" viewBox="0 0 22.2 14.6"><polyline points="3.5,3.5 11.1,11.1 18.7,3.5" fill="none" stroke="#222" stroke-width="3.5" stroke-linecap="round" stroke-linejoin="round"/></svg><svg class="s" style="left:205.0px;top:566.7px;" width="36" height="33" viewBox="0 0 36 33"><rect x="3" y="3" width="12" height="12" transform="rotate(45 9 9)" fill="#fbf3ea" stroke="#a5483e" stroke-width="1.9"/><rect x="6.5" y="6.5" width="5" height="5" transform="rotate(45 9 9)" fill="#a5483e"/><rect x="21" y="3" width="12" height="12" transform="rotate(45 27 9)" fill="#fbf3ea" stroke="#a5483e" stroke-width="1.9"/><rect x="24.5" y="6.5" width="5" height="5" transform="rotate(45 27 9)" fill="#a5483e"/><rect x="12" y="17.2" width="12" height="12" transform="rotate(45 18 23.2)" fill="#fbf3ea" stroke="#a5483e" stroke-width="1.9"/><rect x="15.5" y="20.7" width="5" height="5" transform="rotate(45 18 23.2)" fill="#a5483e"/></svg><div class="t" style="left:287.7px;top:621.2px;font-size:30px;line-height:30px;color:#222222;font-weight:normal;font-family:'Liberation Sans', sans-serif;letter-spacing:0.488px;">public</div><svg class="s" style="left:202.5px;top:631.8px;" width="22.2" height="14.6" viewBox="0 0 22.2 14.6"><polyline points="3.5,3.5 11.1,11.1 18.7,3.5" fill="none" stroke="#222" stroke-width="3.5" stroke-linecap="round" stroke-linejoin="round"/></svg><svg class="s" style="left:241.7px;top:620.5px;" width="34" height="34" viewBox="0 0 34 34"><rect x="7" y="7" width="20" height="20" transform="rotate(45 17 17)" fill="#f6ece6" stroke="#a5483e" stroke-width="2.4"/>
<rect x="12.5" y="12.5" width="9" height="9" transform="rotate(45 17 17)" fill="#a5483e"/></svg><div class="t" style="left:325.5px;top:675.2px;font-size:30px;line-height:30px;color:#222222;font-weight:normal;font-family:'Liberation Sans', sans-serif;letter-spacing:-0.267px;">Aggregates</div><svg class="s" style="left:242.3px;top:681.9px;" width="14.5" height="22.0" viewBox="0 0 14.5 22.0"><polyline points="3.5,3.5 11.0,11.0 3.5,18.5" fill="none" stroke="#222" stroke-width="3.5" stroke-linecap="round" stroke-linejoin="round"/></svg><svg class="s" style="left:277.9px;top:669.4px;" width="34" height="41" viewBox="0 0 34 41"><rect x="1" y="1" width="22" height="29" rx="3" fill="#d6e6f6" stroke="#6e6e6e" stroke-width="2"/><rect x="6" y="6" width="22" height="29" rx="3" fill="#d6e6f6" stroke="#6e6e6e" stroke-width="2"/><rect x="11" y="11" width="22" height="29" rx="3" fill="#d6e6f6" stroke="#6e6e6e" stroke-width="2"/><rect x="14" y="15" width="16" height="6" fill="#c8c85a"/><rect x="15" y="24" width="4.5" height="3.5" fill="#8a8a8a"/><rect x="15" y="31" width="4.5" height="3.5" fill="#8a8a8a"/><rect x="22.5" y="24" width="4.5" height="3.5" fill="#8a8a8a"/><rect x="22.5" y="31" width="4.5" height="3.5" fill="#8a8a8a"/></svg><div class="t" style="left:324.1px;top:729.2px;font-size:30px;line-height:30px;color:#222222;font-weight:normal;font-family:'Liberation Sans', sans-serif;letter-spacing:0.230px;">Collations</div><svg class="s" style="left:242.3px;top:735.9px;" width="14.5" height="22.0" viewBox="0 0 14.5 22.0"><polyline points="3.5,3.5 11.0,11.0 3.5,18.5" fill="none" stroke="#222" stroke-width="3.5" stroke-linecap="round" stroke-linejoin="round"/></svg><svg class="s" style="left:277.0px;top:724.6px;" width="35" height="37" viewBox="0 0 35 37"><text x="-0.5" y="17" font-family="Liberation Sans" font-size="23" fill="#c27d74" stroke="#c27d74" stroke-width="0.9">A</text>
<text x="0.5" y="36.4" font-family="Liberation Sans" font-size="23" fill="#c27d74" stroke="#c27d74" stroke-width="0.9">B</text>
<path d="M26.5,6 L26.5,33 M19.5,26 L26.5,33 L33.5,26" fill="none" stroke="#c27d74" stroke-width="2.4"/></svg><div class="t" style="left:323.1px;top:783.2px;font-size:30px;line-height:30px;color:#222222;font-weight:normal;font-family:'Liberation Sans', sans-serif;letter-spacing:0.062px;">Domains</div><svg class="s" style="left:242.3px;top:789.9px;" width="14.5" height="22.0" viewBox="0 0 14.5 22.0"><polyline points="3.5,3.5 11.0,11.0 3.5,18.5" fill="none" stroke="#222" stroke-width="3.5" stroke-linecap="round" stroke-linejoin="round"/></svg><svg class="s" style="left:278.3px;top:782.6px;" width="34" height="31" viewBox="0 0 34 31"><path d="M3,12 L3,23 L18,23 L18,12" fill="#d3e2f0" stroke="#6f6f6f" stroke-width="1.8"/>
<path d="M1,12 L11,2 L21,12" fill="none" stroke="#b0463c" stroke-width="2.2"/>
<rect x="8" y="14" width="5" height="8" fill="#7a4a2a"/>
<path d="M13,19 L13,30 L31,30 L31,19" fill="#d3e2f0" stroke="#6f6f6f" stroke-width="1.8"/>
<path d="M10,18 L22,7 L34,18" fill="#d3e2f0" stroke="#b0463c" stroke-width="2.2"/>
<rect x="13.5" y="18.5" width="17" height="11" fill="#d3e2f0"/>
<rect x="19" y="20" width="6" height="9.5" fill="#7a4a2a"/></svg><div class="t" style="left:323.1px;top:837.2px;font-size:30px;line-height:30px;color:#222222;font-weight:normal;font-family:'Liberation Sans', sans-serif;letter-spacing:-0.070px;">FTS Configurations</div><svg class="s" style="left:242.3px;top:843.9px;" width="14.5" height="22.0" viewBox="0 0 14.5 22.0"><polyline points="3.5,3.5 11.0,11.0 3.5,18.5" fill="none" stroke="#222" stroke-width="3.5" stroke-linecap="round" stroke-linejoin="round"/></svg><svg class="s" style="left:281.2px;top:833.8px;" width="30" height="37" viewBox="0 0 30 37"><path d="M1,3 Q1,1 3,1 L13,1 L19,7 L19,27 Q19,29 17,29 L3,29 Q1,29 1,27 Z" fill="#f2f2f2" stroke="#7a7a7a" stroke-width="1.8"/>
<path d="M8,8 Q8,6 10,6 L19,6 L28,15 L28,34 Q28,36 26,36 L10,36 Q8,36 8,34 Z" fill="#f2f2f2" stroke="#7a7a7a" stroke-width="1.8"/>
<circle cx="18" cy="26.5" r="4.6" fill="none" stroke="#6a6a6a" stroke-width="2.6" stroke-dasharray="2.2 1.4"/>
<circle cx="18" cy="26.5" r="3.2" fill="none" stroke="#6a6a6a" stroke-width="1.6"/></svg><div class="t" style="left:323.1px;top:891.2px;font-size:30px;line-height:30px;color:#222222;font-weight:normal;font-family:'Liberation Sans', sans-serif;letter-spacing:-0.165px;">FTS Dictionaries</div><svg class="s" style="left:242.3px;top:897.9px;" width="14.5" height="22.0" viewBox="0 0 14.5 22.0"><polyline points="3.5,3.5 11.0,11.0 3.5,18.5" fill="none" stroke="#222" stroke-width="3.5" stroke-linecap="round" stroke-linejoin="round"/></svg><svg class="s" style="left:279.3px;top:889.6px;" width="32" height="33" viewBox="0 0 32 33"><rect x="1" y="1" width="10" height="31" fill="#dceaf6" stroke="#4a4a4a" stroke-width="2"/>
<path d="M1,7 L11,7 M1,26 L11,26" stroke="#4a4a4a" stroke-width="1.5"/>
<rect x="16" y="6" width="9" height="26" transform="rotate(-22 20.5 19)" fill="#dceaf6" stroke="#6a8fc0" stroke-width="2"/></svg><div class="t" style="left:323.1px;top:945.2px;font-size:30px;line-height:30px;color:#222222;font-weight:normal;font-family:'Liberation Sans', sans-serif;letter-spacing:-0.571px;">FTS Parsers</div><svg class="s" style="left:242.3px;top:951.9px;" width="14.5" height="22.0" viewBox="0 0 14.5 22.0"><polyline points="3.5,3.5 11.0,11.0 3.5,18.5" fill="none" stroke="#222" stroke-width="3.5" stroke-linecap="round" stroke-linejoin="round"/></svg><svg class="s" style="left:277.3px;top:951.4px;" width="33" height="18" viewBox="0 0 33 18"><text x="0" y="17.5" font-family="Liberation Sans" font-weight="bold" font-size="24" fill="#6e9a3a" letter-spacing="1">Aa</text></svg><div class="t" style="left:323.1px;top:999.2px;font-size:30px;line-height:30px;color:#222222;font-weight:normal;font-family:'Liberation Sans', sans-serif;letter-spacing:-0.459px;">FTS Templates</div><svg class="s" style="left:242.3px;top:1005.9px;" width="14.5" height="22.0" viewBox="0 0 14.5 22.0"><polyline points="3.5,3.5 11.0,11.0 3.5,18.5" fill="none" stroke="#222" stroke-width="3.5" stroke-linecap="round" stroke-linejoin="round"/></svg><svg class="s" style="left:279.3px;top:999.4px;" width="32" height="32" viewBox="0 0 32 32"><rect x="1" y="1" width="21" height="21" rx="3" fill="#fdf9dc" stroke="#b9c055" stroke-width="2"/>
<rect x="7" y="7" width="24" height="24" rx="3" fill="#fdf9dc" stroke="#b9c055" stroke-width="2"/>
<circle cx="17" cy="17" r="5" fill="none" stroke="#a8ad40" stroke-width="2"/>
<path d="M20.5,20.5 L25,25" stroke="#a8ad40" stroke-width="2.2"/></svg><div class="t" style="left:323.1px;top:1053.2px;font-size:30px;line-height:30px;color:#222222;font-weight:normal;font-family:'Liberation Sans', sans-serif;letter-spacing:-0.350px;">Foreign Tables</div><svg class="s" style="left:242.3px;top:1059.9px;" width="14.5" height="22.0" viewBox="0 0 14.5 22.0"><polyline points="3.5,3.5 11.0,11.0 3.5,18.5" fill="none" stroke="#222" stroke-width="3.5" stroke-linecap="round" stroke-linejoin="round"/></svg><svg class="s" style="left:279.7px;top:1054.6px;" width="33" height="29" viewBox="0 0 33 29"><rect x="1" y="1" width="22" height="22" rx="2" fill="#eceef2" stroke="#5b93d9" stroke-width="2"/>
<rect x="7" y="7" width="20" height="21" rx="1.5" fill="#e8eaee" stroke="#5b93d9" stroke-width="2"/>
<path d="M7,14 L27,14 M17,7 L17,28" stroke="#5b93d9" stroke-width="2"/>
<path d="M7,21 L27,21" stroke="#aaa" stroke-width="2"/>
<path d="M24,9 L31,2 M26,1.5 L32,1.5 L32,7.5" fill="none" stroke="#5b93d9" stroke-width="2"/></svg><div class="t" style="left:323.1px;top:1107.2px;font-size:30px;line-height:30px;color:#222222;font-weight:normal;font-family:'Liberation Sans', sans-serif;letter-spacing:0.210px;">Functions</div><svg class="s" style="left:242.3px;top:1113.9px;" width="14.5" height="22.0" viewBox="0 0 14.5 22.0"><polyline points="3.5,3.5 11.0,11.0 3.5,18.5" fill="none" stroke="#222" stroke-width="3.5" stroke-linecap="round" stroke-linejoin="round"/></svg><svg class="s" style="left:272.5px;top:1101.8px;" width="42" height="40" viewBox="0 0 42 40"><path d="M13.5,7.2 Q8.9,7.2 8.9,11.5 V16.3 Q8.9,18.6 5.6,19.1 Q8.7,19.6 8.7,21.9 V27.5 Q8.7,30.9 13.5,30.9" fill="#effbfd" stroke="#5b7da3" stroke-width="2"/>
<path d="M24.4,7 Q29.3,7 29.3,11.4" fill="none" stroke="#5b7da3" stroke-width="2"/>
<path d="M13.5,7.2 H24.4 L29.3,11.4 V30.9 H13.5 Z" fill="#effbfd"/>
<path d="M21.1,11.9 H31.4 Q36.3,11.9 36.3,16 V32 Q36.3,35.8 31.4,35.8 H21.1 Q16,35.8 16,32 V16 Q16,11.9 21.1,11.9 Z" fill="#effbfd"/>
<path d="M21.1,11.9 Q16,11.9 16,16 V21.7 Q16,23.2 12.9,23.65 Q16,24.1 16,25.7 V32 Q16,35.8 21.1,35.8" fill="none" stroke="#5b7da3" stroke-width="2"/>
<path d="M31.4,11.9 Q36.3,11.9 36.3,16 V21.7 Q36.3,23.2 39.4,23.65 Q36.3,24.1 36.3,25.7 V32 Q36.3,35.8 31.4,35.8" fill="none" stroke="#5b7da3" stroke-width="2"/><path d="M22.4,18 H30.4 M22.4,23.6 H30.4 M22.4,29.3 H27.5" stroke="#5b7da3" stroke-width="2.2" stroke-linecap="round"/></svg><div class="t" style="left:323.1px;top:1161.2px;font-size:30px;line-height:30px;color:#222222;font-weight:normal;font-family:'Liberation Sans', sans-serif;letter-spacing:0.132px;">Materialized Views</div><svg class="s" style="left:242.3px;top:1167.9px;" width="14.5" height="22.0" viewBox="0 0 14.5 22.0"><polyline points="3.5,3.5 11.0,11.0 3.5,18.5" fill="none" stroke="#222" stroke-width="3.5" stroke-linecap="round" stroke-linejoin="round"/></svg><svg class="s" style="left:277.9px;top:1160.6px;" width="34" height="33" viewBox="0 0 34 33"><rect x="1" y="1" width="24" height="24" fill="#d8df6e" stroke="#b8c050" stroke-width="1.5"/>
<rect x="6" y="6" width="27" height="26" fill="#e4ea80" stroke="#b8c050" stroke-width="1.5"/>
<rect x="10" y="10" width="17" height="17" fill="none" stroke="#a0a840" stroke-width="2"/>
<rect x="15" y="15" width="7" height="7" fill="none" stroke="#a0a840" stroke-width="2"/>
<path d="M22,27 L27,31 L33,25" fill="none" stroke="#a0a840" stroke-width="1.5"/></svg><div class="t" style="left:324.2px;top:1215.2px;font-size:30px;line-height:30px;color:#222222;font-weight:normal;font-family:'Liberation Sans', sans-serif;letter-spacing:-0.285px;">Operators</div><svg class="s" style="left:242.3px;top:1221.9px;" width="14.5" height="22.0" viewBox="0 0 14.5 22.0"><polyline points="3.5,3.5 11.0,11.0 3.5,18.5" fill="none" stroke="#222" stroke-width="3.5" stroke-linecap="round" stroke-linejoin="round"/></svg><svg class="s" style="left:277.3px;top:1213.2px;" width="36" height="36" viewBox="0 0 36 36"><path d="M7.5,1 L14.5,1 L14.5,7.5 L21,7.5 L21,14.5 L14.5,14.5 L14.5,21 L7.5,21 L7.5,14.5 L1,14.5 L1,7.5 L7.5,7.5 Z" fill="#c8d3e0" stroke="#6a6a6a" stroke-width="2.4"/><path d="M20.5,14 L27.5,14 L27.5,20.5 L34,20.5 L34,27.5 L27.5,27.5 L27.5,34 L20.5,34 L20.5,27.5 L14,27.5 L14,20.5 L20.5,20.5 Z" fill="#c8d3e0" stroke="#6a6a6a" stroke-width="2.4"/></svg><div class="t" style="left:323.1px;top:1269.2px;font-size:30px;line-height:30px;color:#222222;font-weight:normal;font-family:'Liberation Sans', sans-serif;letter-spacing:-0.085px;">Procedures</div><svg class="s" style="left:242.3px;top:1275.9px;" width="14.5" height="22.0" viewBox="0 0 14.5 22.0"><polyline points="3.5,3.5 11.0,11.0 3.5,18.5" fill="none" stroke="#222" stroke-width="3.5" stroke-linecap="round" stroke-linejoin="round"/></svg><svg class="s" style="left:272.5px;top:1263.8px;" width="42" height="40" viewBox="0 0 42 40"><path d="M13.5,7.2 Q8.9,7.2 8.9,11.5 V16.3 Q8.9,18.6 5.6,19.1 Q8.7,19.6 8.7,21.9 V27.5 Q8.7,30.9 13.5,30.9" fill="#effbfd" stroke="#5b7da3" stroke-width="2"/>
<path d="M24.4,7 Q29.3,7 29.3,11.4" fill="none" stroke="#5b7da3" stroke-width="2"/>
<path d="M13.5,7.2 H24.4 L29.3,11.4 V30.9 H13.5 Z" fill="#effbfd"/>
<path d="M21.1,11.9 H31.4 Q36.3,11.9 36.3,16 V32 Q36.3,35.8 31.4,35.8 H21.1 Q16,35.8 16,32 V16 Q16,11.9 21.1,11.9 Z" fill="#effbfd"/>
<path d="M21.1,11.9 Q16,11.9 16,16 V21.7 Q16,23.2 12.9,23.65 Q16,24.1 16,25.7 V32 Q16,35.8 21.1,35.8" fill="none" stroke="#5b7da3" stroke-width="2"/>
<path d="M31.4,11.9 Q36.3,11.9 36.3,16 V21.7 Q36.3,23.2 39.4,23.65 Q36.3,24.1 36.3,25.7 V32 Q36.3,35.8 31.4,35.8" fill="none" stroke="#5b7da3" stroke-width="2"/></svg><div class="t" style="left:324.2px;top:1323.2px;font-size:30px;line-height:30px;color:#222222;font-weight:normal;font-family:'Liberation Sans', sans-serif;letter-spacing:-0.484px;">Sequences</div><svg class="s" style="left:242.3px;top:1329.9px;" width="14.5" height="22.0" viewBox="0 0 14.5 22.0"><polyline points="3.5,3.5 11.0,11.0 3.5,18.5" fill="none" stroke="#222" stroke-width="3.5" stroke-linecap="round" stroke-linejoin="round"/></svg><svg class="s" style="left:277.7px;top:1330.4px;" width="35" height="17" viewBox="0 0 35 17"><text x="0" y="16.5" font-family="Liberation Sans" font-weight="bold" font-size="22" fill="#5a3fb5" letter-spacing="-1">1..3</text></svg><div class="t" style="left:324.9px;top:1377.2px;font-size:30px;line-height:30px;color:#222222;font-weight:normal;font-family:'Liberation Sans', sans-serif;letter-spacing:-0.401px;">Tables (2)</div><svg class="s" style="left:238.5px;top:1387.8px;" width="22.2" height="14.6" viewBox="0 0 22.2 14.6"><polyline points="3.5,3.5 11.1,11.1 18.7,3.5" fill="none" stroke="#222" stroke-width="3.5" stroke-linecap="round" stroke-linejoin="round"/></svg><svg class="s" style="left:278.6px;top:1376.8px;" width="33" height="32" viewBox="0 0 33 32"><rect x="1" y="1" width="26" height="24" rx="3" fill="#fff" stroke="#5b93d9" stroke-width="2"/>
<g transform="translate(5.5,5.5)"><rect x="1" y="1" width="25" height="24" rx="2" fill="#ececef" stroke="#5b93d9" stroke-width="2"/>
<path d="M1,9.36 L26,9.36 M13.5,1 L13.5,25" stroke="#5b93d9" stroke-width="2"/>
<path d="M2,17.16 L25,17.16" stroke="#b9b9bd" stroke-width="2"/>
<path d="M13.5,9.88 L13.5,24" stroke="#b9b9bd" stroke-width="2"/></g></svg><div class="t" style="left:360.2px;top:1431.2px;font-size:30px;line-height:30px;color:#222222;font-weight:normal;font-family:'Liberation Sans', sans-serif;letter-spacing:-2.074px;">OBSERVATION</div><svg class="s" style="left:278.4px;top:1437.9px;" width="14.5" height="22.0" viewBox="0 0 14.5 22.0"><polyline points="3.5,3.5 11.0,11.0 3.5,18.5" fill="none" stroke="#222" stroke-width="3.5" stroke-linecap="round" stroke-linejoin="round"/></svg><svg class="s" style="left:314.5px;top:1432.8px;" width="31" height="27" viewBox="0 0 31 27"><rect x="1" y="1" width="29" height="25" rx="2" fill="#ececef" stroke="#5b93d9" stroke-width="2"/>
<path d="M1,9.719999999999999 L30,9.719999999999999 M15.5,1 L15.5,26" stroke="#5b93d9" stroke-width="2"/>
<path d="M2,17.82 L29,17.82" stroke="#b9b9bd" stroke-width="2"/>
<path d="M15.5,10.26 L15.5,25" stroke="#b9b9bd" stroke-width="2"/></svg><div class="t" style="left:359.1px;top:1485.2px;font-size:30px;line-height:30px;color:#222222;font-weight:normal;font-family:'Liberation Sans', sans-serif;letter-spacing:-1.738px;">PATIENT</div><svg class="s" style="left:278.4px;top:1491.9px;" width="14.5" height="22.0" viewBox="0 0 14.5 22.0"><polyline points="3.5,3.5 11.0,11.0 3.5,18.5" fill="none" stroke="#222" stroke-width="3.5" stroke-linecap="round" stroke-linejoin="round"/></svg><svg class="s" style="left:314.5px;top:1486.8px;" width="31" height="27" viewBox="0 0 31 27"><rect x="1" y="1" width="29" height="25" rx="2" fill="#ececef" stroke="#5b93d9" stroke-width="2"/>
<path d="M1,9.719999999999999 L30,9.719999999999999 M15.5,1 L15.5,26" stroke="#5b93d9" stroke-width="2"/>
<path d="M2,17.82 L29,17.82" stroke="#b9b9bd" stroke-width="2"/>
<path d="M15.5,10.26 L15.5,25" stroke="#b9b9bd" stroke-width="2"/></svg><div class="t" style="left:324.9px;top:1539.2px;font-size:30px;line-height:30px;color:#222222;font-weight:normal;font-family:'Liberation Sans', sans-serif;">Trigger Functions</div><svg class="s" style="left:242.3px;top:1545.9px;" width="14.5" height="22.0" viewBox="0 0 14.5 22.0"><polyline points="3.5,3.5 11.0,11.0 3.5,18.5" fill="none" stroke="#222" stroke-width="3.5" stroke-linecap="round" stroke-linejoin="round"/></svg><svg class="s" style="left:272.5px;top:1530.3px;" width="42" height="40" viewBox="0 0 42 40"><path d="M13.5,7.2 Q8.9,7.2 8.9,11.5 V16.3 Q8.9,18.6 5.6,19.1 Q8.7,19.6 8.7,21.9 V27.5 Q8.7,30.9 13.5,30.9" fill="#effbfd" stroke="#5b7da3" stroke-width="2"/>
<path d="M24.4,7 Q29.3,7 29.3,11.4" fill="none" stroke="#5b7da3" stroke-width="2"/>
<path d="M13.5,7.2 H24.4 L29.3,11.4 V30.9 H13.5 Z" fill="#effbfd"/>
<path d="M21.1,11.9 H31.4 Q36.3,11.9 36.3,16 V32 Q36.3,35.8 31.4,35.8 H21.1 Q16,35.8 16,32 V16 Q16,11.9 21.1,11.9 Z" fill="#effbfd"/>
<path d="M21.1,11.9 Q16,11.9 16,16 V21.7 Q16,23.2 12.9,23.65 Q16,24.1 16,25.7 V32 Q16,35.8 21.1,35.8" fill="none" stroke="#5b7da3" stroke-width="2"/>
<path d="M31.4,11.9 Q36.3,11.9 36.3,16 V21.7 Q36.3,23.2 39.4,23.65 Q36.3,24.1 36.3,25.7 V32 Q36.3,35.8 31.4,35.8" fill="none" stroke="#5b7da3" stroke-width="2"/><path d="M22.4,18 H30.4 M22.4,23.6 H30.4 M22.4,29.3 H27.5" stroke="#5b7da3" stroke-width="2.2" stroke-linecap="round"/></svg></div><svg class="s" style="left:1888.0px;top:19.9px;" width="40" height="41" viewBox="0 0 40 41"><rect width="40" height="41" fill="#611f27"/>
<path d="M11.85,0 H16 V8.2 H24 V0 H28 V4.03 H32 V8.2 H28 V20.36 H36 V33 H4 V20.36 H11.85 V8.2 H8 V4.03 H11.85 Z" fill="#c9ab80"/>
<rect x="8" y="24.8" width="3.85" height="4" fill="#611f27"/><rect x="28" y="24.8" width="3.9" height="4" fill="#611f27"/></svg><svg class="s" style="left:660.0px;top:88.0px;" width="40.0" height="42.0" viewBox="0 0 40.0 42.0"><g transform="scale(1.0)" fill="#222222">
<ellipse cx="19.95" cy="12.6" rx="14.7" ry="6"/>
<path d="M5.3,18.3 Q12,21.5 20.5,21 L20.5,29.1 Q12,29.5 5.3,25.8 Z"/>
<path d="M24.9,21 Q30,20.5 34.4,18 L34.4,26 Z"/>
<path d="M5.3,28.8 Q12,32 20.5,31.9 L20.5,39.6 Q12,40 5.3,36.3 Z"/>
<path d="M22.4,24.1 L38,32.5 L22.4,41 Z"/></g></svg><svg class="s" style="left:731.5px;top:99.7px;" width="36" height="31" viewBox="0 0 36 31"><rect x="0" y="0" width="35.5" height="30.1" rx="3" fill="#6f6f6f"/>
<rect x="2.9" y="5.1" width="8.9" height="6.3" fill="#fff"/><rect x="2.9" y="13.3" width="8.9" height="6.3" fill="#fff"/><rect x="2.9" y="21.6" width="8.9" height="6.3" fill="#fff"/><rect x="13.7" y="5.1" width="8.9" height="6.3" fill="#fff"/><rect x="13.7" y="13.3" width="8.9" height="6.3" fill="#fff"/><rect x="13.7" y="21.6" width="8.9" height="6.3" fill="#fff"/><rect x="24.5" y="5.1" width="8.9" height="6.3" fill="#fff"/><rect x="24.5" y="13.3" width="8.9" height="6.3" fill="#fff"/><rect x="24.5" y="21.6" width="8.9" height="6.3" fill="#fff"/></svg><svg class="s" style="left:799.0px;top:98.8px;" width="37" height="28" viewBox="0 0 37 28"><path d="M0,0.4 H27.9 L22.5,6.8 H16.4 Q14.3,7 14.1,9.6 V25.6 L10.7,24 V11.7 Z" fill="#6f6f6f"/>
<rect x="16.8" y="10" width="18.5" height="16" rx="1.5" fill="#6f6f6f"/>
<rect x="18.7" y="14" width="6.6" height="4.2" fill="#fff"/><rect x="26.8" y="14" width="6.8" height="4.2" fill="#fff"/>
<rect x="18.7" y="20" width="6.6" height="4.2" fill="#fff"/><rect x="26.8" y="20" width="6.8" height="4.2" fill="#fff"/></svg><svg class="s" style="left:864.0px;top:88.0px;" width="42" height="42" viewBox="0 0 42 42"><circle cx="16.5" cy="17" r="12" fill="none" stroke="#222222" stroke-width="4.6"/>
<path d="M25.5,26 L35.5,36" stroke="#222222" stroke-width="5" stroke-linecap="round"/></svg><svg class="s" style="left:2233.9px;top:91.8px;" width="20.4" height="31.8" viewBox="0 0 20.4 31.8"><polyline points="15.9,4.5 4.5,15.9 15.9,27.3" fill="none" stroke="#222222" stroke-width="4.5" stroke-linecap="round" stroke-linejoin="round"/></svg><svg class="s" style="left:2287.6px;top:91.8px;" width="20.4" height="31.8" viewBox="0 0 20.4 31.8"><polyline points="4.5,4.5 15.9,15.9 4.5,27.3" fill="none" stroke="#222222" stroke-width="4.5" stroke-linecap="round" stroke-linejoin="round"/></svg><svg class="s" style="left:2338.0px;top:94.0px;" width="28" height="28" viewBox="0 0 28 28"><path d="M5.5,5.5 L22,22 M22,5.5 L5.5,22" stroke="#222222" stroke-width="5" stroke-linecap="round"/></svg><svg class="s" style="left:946.0px;top:158.0px;" width="52" height="48" viewBox="0 0 52 48"><g transform="translate(25.9,23.8) rotate(-44)" fill="none" stroke="#222222" stroke-width="3.1">
<path d="M-24.5,0 H-16"/><path d="M16,0 H24.5"/>
<path d="M-4,-13.5 V13.5 M3.8,-13.5 V13.5"/>
<path d="M-4,-10.5 H-9 Q-16.5,-10.5 -16.5,-3 V3 Q-16.5,10.5 -9,10.5 H-4"/>
<path d="M3.8,-10.5 H9 Q16.5,-10.5 16.5,-3 V3 Q16.5,10.5 9,10.5 H3.8"/>
<path d="M-4,-4.5 H3.8 M-4,4.5 H3.8"/></g></svg><svg class="s" style="left:1958.9px;top:177.9px;" width="23.2" height="15.2" viewBox="0 0 23.2 15.2"><polyline points="3.6,3.6 11.6,11.6 19.6,3.6" fill="none" stroke="#222222" stroke-width="3.6" stroke-linecap="round" stroke-linejoin="round"/></svg><svg class="s" style="left:2034.5px;top:158.0px;" width="37.2" height="39.06" viewBox="0 0 37.2 39.06"><g transform="scale(0.93)" fill="#222222">
<ellipse cx="19.95" cy="12.6" rx="14.7" ry="6"/>
<path d="M5.3,18.3 Q12,21.5 20.5,21 L20.5,29.1 Q12,29.5 5.3,25.8 Z"/>
<path d="M24.9,21 Q30,20.5 34.4,18 L34.4,26 Z"/>
<path d="M5.3,28.8 Q12,32 20.5,31.9 L20.5,39.6 Q12,40 5.3,36.3 Z"/>
<path d="M22.4,24.1 L38,32.5 L22.4,41 Z"/></g></svg><svg class="s" style="left:0.0px;top:0.0px;pointer-events:none;" width="2374" height="300" viewBox="0 0 2374 300"><path d="M2339.96,168.31 A13.3,13.3 0 0 1 2343.61,194.25" fill="none" stroke="#222222" stroke-width="3.6" stroke-linecap="round"/>
<path d="M2326.92,177.27 A13.3,13.3 0 0 1 2328.10,174.75 M2328.35,188.84 A13.3,13.3 0 0 1 2327.08,186.37 M2336.73,194.61 A13.3,13.3 0 0 1 2334.09,193.75 " fill="none" stroke="#222222" stroke-width="3.6" stroke-linecap="round"/>
<path d="M2334.8,169.8 L2342.3,164.2 L2343.3,175.2 Z" fill="#222222" stroke="#222222" stroke-width="1.5" stroke-linejoin="round"/></svg><svg class="s" style="left:953.9px;top:242.8px;" width="36" height="29" viewBox="0 0 36 29"><path d="M2,0 H12 L15.5,4 H34 Q36,4 36,6 V27 Q36,29 34,29 H2 Q0,29 0,27 V2 Q0,0 2,0 Z" fill="#222222"/></svg><svg class="s" style="left:1031.0px;top:241.2px;" width="33" height="33" viewBox="0 0 33 33"><path d="M3,0 H25 L32.1,7.1 V29.6 Q32.1,32.6 29.1,32.6 H3 Q0,32.6 0,29.6 V3 Q0,0 3,0 Z" fill="#222222"/>
<rect x="4.5" y="4" width="18" height="7" rx="2.5" fill="#fff"/>
<circle cx="16" cy="22.3" r="5" fill="#fff"/></svg><svg class="s" style="left:1092.5px;top:249.4px;" width="24.6" height="16.1" viewBox="0 0 24.6 16.1"><polyline points="3.8,3.8 12.3,12.3 20.8,3.8" fill="none" stroke="#222222" stroke-width="3.8" stroke-linecap="round" stroke-linejoin="round"/></svg><svg class="s" style="left:1156.0px;top:239.0px;" width="38" height="38" viewBox="0 0 38 38"><path d="M4,34.5 L5,27 L25,7 L31,13 L11,33 Z" fill="#222222"/>
<path d="M27.5,4.5 L30,2 Q31.5,0.5 33,2 L35.5,4.5 Q37,6 35.5,7.5 L33,10 Z" fill="#222222"/></svg><svg class="s" style="left:1193.7px;top:249.4px;" width="24.6" height="16.1" viewBox="0 0 24.6 16.1"><polyline points="3.8,3.8 12.3,12.3 20.8,3.8" fill="none" stroke="#222222" stroke-width="3.8" stroke-linecap="round" stroke-linejoin="round"/></svg><svg class="s" style="left:1277.3px;top:242.8px;" width="30" height="30" viewBox="0 0 30 30"><path d="M0.5,1.5 Q0.5,0 2,0 H27.5 Q29.1,0 29.1,1.5 L18,14 V27 Q18,29 15.5,29 H14 Q11.5,29 11.5,27 V14 Z" fill="#6f6f6f"/></svg><svg class="s" style="left:1337.4px;top:249.4px;" width="24.6" height="16.1" viewBox="0 0 24.6 16.1"><polyline points="3.8,3.8 12.3,12.3 20.8,3.8" fill="none" stroke="#6f6f6f" stroke-width="3.8" stroke-linecap="round" stroke-linejoin="round"/></svg><svg class="s" style="left:1576.5px;top:251.6px;" width="23" height="13" viewBox="0 0 23 13"><path d="M0,0 H22.9 L11.45,12.5 Z" fill="#646b82"/></svg><svg class="s" style="left:1664.2px;top:243.3px;" width="28" height="28" viewBox="0 0 28 28"><rect width="27.3" height="27.6" rx="4" fill="#6f6f6f"/></svg><svg class="s" style="left:1743.0px;top:242.7px;" width="24" height="30" viewBox="0 0 24 30"><path d="M1,1.5 Q1,0 2.5,0.8 L22.5,13.2 Q23.8,14.4 22.5,15.6 L2.5,28 Q1,28.8 1,27.3 Z" fill="#222222"/></svg><svg class="s" style="left:1798.7px;top:249.9px;" width="24.6" height="16.1" viewBox="0 0 24.6 16.1"><polyline points="3.8,3.8 12.3,12.3 20.8,3.8" fill="none" stroke="#222222" stroke-width="3.8" stroke-linecap="round" stroke-linejoin="round"/></svg><svg class="s" style="left:1864.8px;top:241.2px;" width="33" height="33" viewBox="0 0 33 33"><rect width="32.7" height="32.7" rx="4" fill="#222222"/>
<path d="M10,7 H23 V11.5 H15 V14.2 H22 V18.5 H15 V21.3 H23 V25.8 H10 Z" fill="#fff"/></svg><svg class="s" style="left:1938.2px;top:241.2px;" width="33" height="33" viewBox="0 0 33 33"><rect width="32.7" height="32.7" rx="4" fill="#222222"/>
<rect x="8" y="14" width="4" height="13" fill="#fff"/><rect x="14.5" y="8" width="4" height="19" fill="#fff"/><rect x="21" y="19" width="4" height="8" fill="#fff"/></svg><svg class="s" style="left:2000.3px;top:249.9px;" width="24.6" height="16.1" viewBox="0 0 24.6 16.1"><polyline points="3.8,3.8 12.3,12.3 20.8,3.8" fill="none" stroke="#222222" stroke-width="3.8" stroke-linecap="round" stroke-linejoin="round"/></svg><svg class="s" style="left:2055.0px;top:232.0px;" width="50" height="50" viewBox="0 0 50 50"><g fill="#707174">
<path d="M9.1,14 Q9.1,7.4 25.3,7.4 Q41.5,7.4 41.5,14 Q41.5,17 39.5,17.8 Q33,16.5 27,20.3 Q25.8,20.5 25.3,20.5 Q9.1,20.5 9.1,14 Z"/>
<path d="M9.1,20.2 Q14,23.3 22.7,23.9 Q21.3,25.6 20.6,28.4 Q13,27.8 9.1,25.9 Z"/>
<path d="M9.1,28.1 Q13,30.5 20.6,31.8 Q20.4,33.5 20.8,36.4 Q13,35.7 9.1,33.2 Z"/>
<circle cx="35.5" cy="32.1" r="11.2"/></g><path d="M29,32.7 L33.5,37.8 L42,29" fill="none" stroke="#fff" stroke-width="3.4"/></svg><svg class="s" style="left:2128.9px;top:232.0px;" width="50" height="50" viewBox="0 0 50 50"><g fill="#707174">
<path d="M9.1,14 Q9.1,7.4 25.3,7.4 Q41.5,7.4 41.5,14 Q41.5,17 39.5,17.8 Q33,16.5 27,20.3 Q25.8,20.5 25.3,20.5 Q9.1,20.5 9.1,14 Z"/>
<path d="M9.1,20.2 Q14,23.3 22.7,23.9 Q21.3,25.6 20.6,28.4 Q13,27.8 9.1,25.9 Z"/>
<path d="M9.1,28.1 Q13,30.5 20.6,31.8 Q20.4,33.5 20.8,36.4 Q13,35.7 9.1,33.2 Z"/>
<circle cx="35.5" cy="32.1" r="11.2"/></g><path d="M27.2,31 L33.4,25 V28.8 Q41,28.8 41,34.5 Q41,36.5 39.6,38 Q39.6,33.5 33.4,33.5 V37.1 Z" fill="#fff"/></svg><svg class="s" style="left:0.0px;top:0.0px;" width="2374" height="300" viewBox="0 0 2374 300"><g fill="none" stroke="#222222" stroke-width="3.4" stroke-linecap="round">
<path d="M2235.7,246.5 H2257.3 M2235.7,257.4 H2257.3 M2235.7,268 H2257.3"/></g>
<g fill="none" stroke="#222222" stroke-width="1.8" stroke-linecap="square">
<path d="M2225.6,244.4 L2228.6,243.3 V249.6"/>
<path d="M2225.4,254.9 H2229.9 V257.6 H2225.6 V260.4 H2230.2"/>
<path d="M2225.3,265.4 H2229.9 V271.2 H2225.3 M2226.6,268.3 H2229.9"/></g></svg><svg class="s" style="left:2261.6px;top:249.6px;" width="24.6" height="16.1" viewBox="0 0 24.6 16.1"><polyline points="3.8,3.8 12.3,12.3 20.8,3.8" fill="none" stroke="#222222" stroke-width="3.8" stroke-linecap="round" stroke-linejoin="round"/></svg><svg class="s" style="left:953.9px;top:314.5px;" width="36" height="36" viewBox="0 0 36 36"><circle cx="18" cy="17.9" r="17.9" fill="#222222"/>
<path d="M12.5,13.5 Q12.5,7.5 18,7.5 Q23.5,7.5 23.5,12.5 Q23.5,15.5 20.5,17.5 Q18.2,19 18.2,22" fill="none" stroke="#fff" stroke-width="3.6"/>
<rect x="16" y="25" width="4.4" height="4.4" fill="#fff"/></svg><svg class="s" style="left:1870.8px;top:389.8px;" width="30" height="30" viewBox="0 0 30 30"><g transform="scale(1.0)" fill="#222222">
<path d="M16.5,0 H30 V13.5 L25.4,8.9 L8.9,25.4 L13.5,30 H0 V16.5 L4.6,21.1 L21.1,4.6 Z"/></g></svg><svg class="s" style="left:2324.7px;top:390.5px;" width="28.3" height="28.3" viewBox="0 0 28.3 28.3"><g transform="scale(0.9433333333333334)" fill="#222222">
<path d="M16.5,0 H30 V13.5 L25.4,8.9 L8.9,25.4 L13.5,30 H0 V16.5 L4.6,21.1 L21.1,4.6 Z"/></g></svg><svg class="s" style="left:2158.0px;top:388.0px;" width="22" height="22" viewBox="0 0 22 22"><path d="M3,3 L19,19 M19,3 L3,19" stroke="#222222" stroke-width="3.3"/></svg><svg class="s" style="left:946.0px;top:1174.4px;" width="45" height="33" viewBox="0 0 45 33"><g stroke="#6f6f6f" stroke-width="3.6" stroke-linecap="round" fill="none">
<path d="M2,2.5 H26 M2,11.5 H26 M2,20.5 H16 M33,13 V31 M24,22 H42.5"/></g></svg><svg class="s" style="left:1015.0px;top:1160.0px;" width="240" height="55" viewBox="0 0 240 55"><path d="M10.5,36.2 V12.5 Q10.5,10.5 12.5,10.5 H33.6" fill="none" stroke="#6f6f6f" stroke-width="3.5" stroke-linecap="round"/>
<path d="M19.3,16.3 H30.5 L43,28.5 V44.7 Q43,47.7 40,47.7 H19.3 Q16.3,47.7 16.3,44.7 V19.3 Q16.3,16.3 19.3,16.3 Z" fill="#6f6f6f"/>
<path d="M30.4,18.9 L39.9,28.3 H30.4 Z" fill="#fff"/>
<rect x="129.7" y="12.7" width="28.6" height="31.7" rx="2.5" fill="none" stroke="#6f6f6f" stroke-width="3.5"/>
<path d="M135.3,14.2 H140.3 Q140.3,7.2 144.5,7.2 Q148.7,7.2 148.7,14.2 H152.6 V19.4 H135.3 Z" fill="#6f6f6f"/>
<circle cx="144.5" cy="11.4" r="1.9" fill="#fff"/>
<rect x="205.6" y="14.7" width="24.7" height="3.2" rx="1.6" fill="#6f6f6f"/>
<path d="M213,15 Q213,12.6 215.5,12.6 H221 Q223.4,12.6 223.4,15 Z" fill="#6f6f6f"/>
<path d="M207.2,20 H228.7 V40.6 Q228.7,44.6 224.7,44.6 H211.2 Q207.2,44.6 207.2,40.6 Z" fill="#6f6f6f"/></svg><svg class="s" style="left:1089.4px;top:1181.3px;" width="23.7" height="15.45" viewBox="0 0 23.7 15.45"><polyline points="3.6,3.6 11.85,11.85 20.1,3.6" fill="none" stroke="#222222" stroke-width="3.6" stroke-linecap="round" stroke-linejoin="round"/></svg><svg class="s" style="left:1303.0px;top:1171.9px;" width="32" height="34" viewBox="0 0 32 34"><g fill="#6f6f6f"><ellipse cx="14" cy="4.8" rx="14" ry="4.8"/>
<path d="M0,11 Q7,14.5 17,14.5 Q14.5,16 14.5,19 Q6,19 0,16.5 Z"/>
<path d="M0,21.5 Q6,24 14.5,24.2 V29 Q6,29 0,26.5 Z"/>
<path d="M17,14.5 H28.5 L31.5,17.5 V31.5 Q31.5,33.7 29.3,33.7 H19.3 Q17,33.7 17,31.5 Z"/></g>
<circle cx="24.3" cy="27.5" r="2.6" fill="#fff"/><rect x="20" y="17.5" width="7" height="3.5" fill="#fff"/></svg><svg class="s" style="left:1391.0px;top:1171.9px;" width="26" height="31" viewBox="0 0 26 31"><path d="M9,0 H16.5 V11 H23.5 L12.75,22.5 L2,11 H9 Z" fill="#222222"/>
<rect x="0.5" y="26.8" width="24.7" height="3.8" rx="1.5" fill="#222222"/></svg><svg class="s" style="left:1468.0px;top:1175.0px;" width="44" height="26" viewBox="0 0 44 26"><path d="M4.5,20.5 L16.5,7.5 L25.5,16 L37,4.5" fill="none" stroke="#222222" stroke-width="3.5"/>
<circle cx="4.5" cy="20.5" r="3.2" fill="#222222"/><circle cx="16.5" cy="7.5" r="3.2" fill="#222222"/><circle cx="25.5" cy="16" r="3.2" fill="#222222"/><circle cx="38.5" cy="4" r="3.2" fill="#222222"/></svg><svg class="s" style="left:2324.5px;top:1102.3px;" width="28.3" height="28.3" viewBox="0 0 28.3 28.3"><g transform="scale(0.9433333333333334)" fill="#222222">
<path d="M16.5,0 H30 V13.5 L25.4,8.9 L8.9,25.4 L13.5,30 H0 V16.5 L4.6,21.1 L21.1,4.6 Z"/></g></svg><svg class="s" style="left:1238.0px;top:1258.5px;" width="22" height="28" viewBox="0 0 22 28"><path d="M5.5,12 V8.5 Q5.5,2 10.5,2 Q15.5,2 15.5,8.5 V12" fill="none" stroke="#222222" stroke-width="3.2"/>
<rect x="0.5" y="11.5" width="20" height="16" rx="2.5" fill="#222222"/><circle cx="10.5" cy="19.5" r="2.4" fill="#fff"/></svg><svg class="s" style="left:1434.0px;top:1258.5px;" width="22" height="28" viewBox="0 0 22 28"><path d="M5.5,12 V8.5 Q5.5,2 10.5,2 Q15.5,2 15.5,8.5 V12" fill="none" stroke="#222222" stroke-width="3.2"/>
<rect x="0.5" y="11.5" width="20" height="16" rx="2.5" fill="#222222"/><circle cx="10.5" cy="19.5" r="2.4" fill="#fff"/></svg><svg class="s" style="left:1730.0px;top:1258.5px;" width="22" height="28" viewBox="0 0 22 28"><path d="M5.5,12 V8.5 Q5.5,2 10.5,2 Q15.5,2 15.5,8.5 V12" fill="none" stroke="#222222" stroke-width="3.2"/>
<rect x="0.5" y="11.5" width="20" height="16" rx="2.5" fill="#222222"/><circle cx="10.5" cy="19.5" r="2.4" fill="#fff"/></svg><svg class="s" style="left:2004.0px;top:1258.5px;" width="22" height="28" viewBox="0 0 22 28"><path d="M5.5,12 V8.5 Q5.5,2 10.5,2 Q15.5,2 15.5,8.5 V12" fill="none" stroke="#222222" stroke-width="3.2"/>
<rect x="0.5" y="11.5" width="20" height="16" rx="2.5" fill="#222222"/><circle cx="10.5" cy="19.5" r="2.4" fill="#fff"/></svg><svg class="s" style="left:2239.5px;top:1258.5px;" width="22" height="28" viewBox="0 0 22 28"><path d="M5.5,12 V8.5 Q5.5,2 10.5,2 Q15.5,2 15.5,8.5 V12" fill="none" stroke="#222222" stroke-width="3.2"/>
<rect x="0.5" y="11.5" width="20" height="16" rx="2.5" fill="#222222"/><circle cx="10.5" cy="19.5" r="2.4" fill="#fff"/></svg>
</body></html>
